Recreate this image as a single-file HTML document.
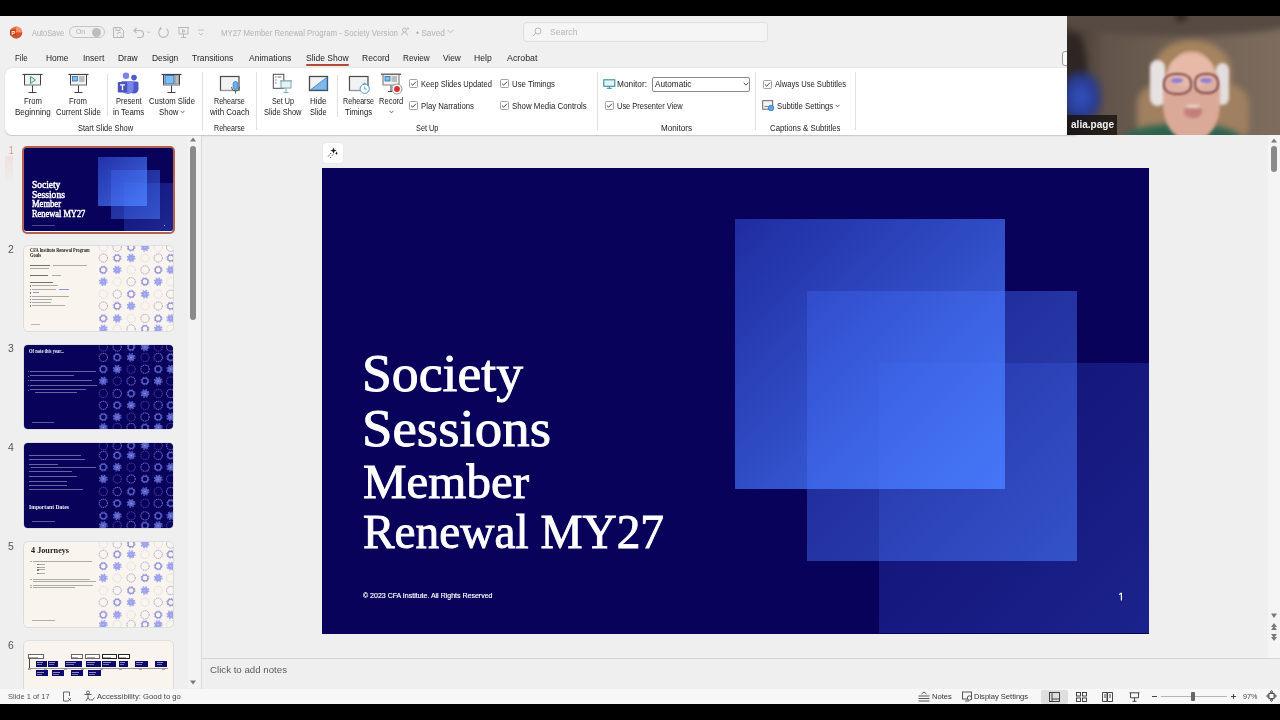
<!DOCTYPE html>
<html><head><meta charset="utf-8">
<style>
*{margin:0;padding:0;box-sizing:border-box}
html,body{width:1280px;height:720px;overflow:hidden;background:#efefef}
body{position:relative;font-family:"Liberation Sans",sans-serif;color:#262626}
.a{position:absolute}
svg.a{overflow:visible}
.t{position:absolute;white-space:nowrap;line-height:1;transform-origin:0 0}
</style></head><body>
<div class="a" style="left:0px;top:16px;width:1280px;height:688px;background:#efefef"></div>
<div class="a" style="left:0px;top:16px;width:1280px;height:52px;background:#f0f0f0"></div>
<svg class="a" style="left:9px;top:26px" width="14" height="13" viewBox="0 0 14 13"><circle cx="7.2" cy="6.5" r="6" fill="#ed6c47"/><path d="M7.2 0.5 A6 6 0 0 1 13.2 6.5 L7.2 6.5Z" fill="#ff8f6b"/><path d="M1.2 6.5 A6 6 0 0 0 7.2 12.5 A6 6 0 0 0 13.2 6.5Z" fill="#d35230"/><rect x="1" y="3.5" width="6" height="6" rx="1" fill="#c43e1c"/><text x="2.4" y="8.6" font-size="5.5" font-family="Liberation Sans" font-weight="700" fill="#fff">P</text></svg>
<div class="t" style="left:32.00px;top:28.57px;font-size:8.3px;color:#b0b0b0;transform:scaleX(0.8891);">AutoSave</div>
<div class="a" style="left:69px;top:26px;width:36px;height:12px;border:1px solid #c4c4c4;border-radius:6px"></div>
<div class="t" style="left:76.00px;top:28.23px;font-size:8px;color:#b0b0b0;transform:scaleX(0.8433);">On</div>
<div class="a" style="left:92px;top:28px;width:9px;height:9px;border-radius:50%;background:#bdbdbd"></div>
<svg class="a" style="left:112px;top:26px" width="13" height="13" viewBox="0 0 13 13" fill="none" stroke="#b8b8b8" stroke-width="1"><path d="M1.5 1.5h7l3 3v7h-10z"/><path d="M4 1.5v3h4v-3"/><path d="M5 8.5a2.5 2.5 0 0 1 4.5-1M9.5 9.5a2.5 2.5 0 0 1-4.5 1"/></svg>
<svg class="a" style="left:132px;top:26px" width="22" height="13" viewBox="0 0 22 13" fill="none" stroke="#b8b8b8" stroke-width="1.1"><path d="M2 4.5h6a3.5 3.5 0 0 1 0 7H5"/><path d="M4.5 2L2 4.5 4.5 7"/><path d="M15 5.5l1.5 1.5 1.5-1.5" stroke-width="0.9"/></svg>
<svg class="a" style="left:157px;top:26px" width="13" height="13" viewBox="0 0 13 13" fill="none" stroke="#b8b8b8" stroke-width="1.1"><path d="M9.5 2.8A4.8 4.8 0 1 1 4 2.5"/><path d="M3 1l1 1.6-1.7 0.9"/></svg>
<svg class="a" style="left:177px;top:26px" width="13" height="13" viewBox="0 0 13 13" fill="none" stroke="#b8b8b8" stroke-width="1"><path d="M1 1.5h11M2 1.5v6.5h9v-6.5M6.5 8v3.5M4 11.5h5"/><path d="M5.5 3.5l2.5 1.5-2.5 1.5z"/></svg>
<svg class="a" style="left:197px;top:28px" width="8" height="8" viewBox="0 0 8 8" fill="none" stroke="#bbb" stroke-width="0.9"><path d="M1 2h6M2 5l2 2 2-2"/></svg>
<div class="t" style="left:221.00px;top:28.77px;font-size:8.3px;color:#b2b2b2;transform:scaleX(0.9427);">MY27 Member Renewal Program - Society Version</div>
<svg class="a" style="left:401px;top:27px" width="9" height="9" viewBox="0 0 9 9" fill="none" stroke="#b5b5b5" stroke-width="0.9"><circle cx="3.5" cy="3" r="2"/><path d="M0.5 8.5a3 3 0 0 1 6 0M6 1.5l2 0M7 .5v2"/></svg>
<div class="t" style="left:416.00px;top:28.77px;font-size:8.3px;color:#b2b2b2;transform:scaleX(1.0088);">• Saved</div>
<svg class="a" style="left:447px;top:29px" width="7" height="5" viewBox="0 0 7 5" fill="none" stroke="#b5b5b5" stroke-width="0.9"><path d="M0.5 0.8l3 3 3-3"/></svg>
<div class="a" style="left:523px;top:22px;width:245px;height:20px;background:#f5f5f5;border:1px solid #dedede;border-radius:4px"></div>
<svg class="a" style="left:532px;top:27px" width="10" height="10" viewBox="0 0 10 10" fill="none" stroke="#b8b8b8" stroke-width="1"><circle cx="6" cy="4" r="3"/><path d="M4 6l-3 3"/></svg>
<div class="t" style="left:550.00px;top:27.97px;font-size:8.3px;color:#b5b5b5;transform:scaleX(1.0457);">Search</div>
<div class="t" style="left:14.60px;top:53.98px;font-size:9px;color:#1e1e1e;transform:scaleX(0.8688);">File</div>
<div class="t" style="left:45.60px;top:53.98px;font-size:9px;color:#1e1e1e;transform:scaleX(0.9372);">Home</div>
<div class="t" style="left:82.50px;top:53.98px;font-size:9px;color:#1e1e1e;transform:scaleX(0.9463);">Insert</div>
<div class="t" style="left:118.20px;top:53.98px;font-size:9px;color:#1e1e1e;transform:scaleX(0.9380);">Draw</div>
<div class="t" style="left:151.60px;top:53.98px;font-size:9px;color:#1e1e1e;transform:scaleX(0.9387);">Design</div>
<div class="t" style="left:192.30px;top:53.98px;font-size:9px;color:#1e1e1e;transform:scaleX(0.9454);">Transitions</div>
<div class="t" style="left:248.60px;top:53.98px;font-size:9px;color:#1e1e1e;transform:scaleX(0.9478);">Animations</div>
<div class="t" style="left:306.30px;top:53.98px;font-size:9px;color:#1e1e1e;transform:scaleX(0.9483);">Slide Show</div>
<div class="t" style="left:362.30px;top:53.98px;font-size:9px;color:#1e1e1e;transform:scaleX(0.9478);">Record</div>
<div class="t" style="left:403.30px;top:53.98px;font-size:9px;color:#1e1e1e;transform:scaleX(0.9048);">Review</div>
<div class="t" style="left:443.20px;top:53.98px;font-size:9px;color:#1e1e1e;transform:scaleX(0.9201);">View</div>
<div class="t" style="left:474.20px;top:53.98px;font-size:9px;color:#1e1e1e;transform:scaleX(0.9562);">Help</div>
<div class="t" style="left:506.50px;top:53.98px;font-size:9px;color:#1e1e1e;transform:scaleX(0.9801);">Acrobat</div>
<div class="a" style="left:306px;top:64.3px;width:43px;height:1.7px;background:#b04a36;border-radius:1px"></div>
<div class="a" style="left:1062px;top:51px;width:9px;height:15px;border:1px solid #9a9a9a;border-radius:3px;background:#fafafa"></div>
<div class="a" style="left:5px;top:68px;width:1075px;height:67px;background:#fff;border-radius:7px;box-shadow:0 0.5px 1.5px rgba(0,0,0,.18)"></div>
<svg class="a" style="left:21px;top:73px;" width="23" height="21" viewBox="0 0 23 21"><path d="M1.5 1.5h20" stroke="#424242" stroke-width="1.2"/><rect x="3.5" y="1.5" width="16" height="10.5" fill="#f3f3f3" stroke="#424242" stroke-width="1"/><path d="M3.5 12h16" stroke="#c8c8c8" stroke-width="1"/><path d="M9.5 3.5l5 3.5-5 3.5z" fill="#d6efd9" stroke="#4e9a64" stroke-width="1"/><path d="M11.5 12.5v7M7.5 19.5h8" stroke="#424242" stroke-width="1"/></svg>
<div class="t" style="left:23.80px;top:96.62px;font-size:8.6px;color:#1c1c1c;transform:scaleX(0.8971);">From</div>
<div class="t" style="left:14.60px;top:108.32px;font-size:8.6px;color:#1c1c1c;transform:scaleX(0.9358);">Beginning</div>
<svg class="a" style="left:67px;top:73px;" width="23" height="21" viewBox="0 0 23 21"><path d="M1.5 1.5h20" stroke="#424242" stroke-width="1.2"/><rect x="3.5" y="1.5" width="16" height="10.5" fill="#f3f3f3" stroke="#424242" stroke-width="1"/><path d="M3.5 12h16" stroke="#c8c8c8" stroke-width="1"/><rect x="5.5" y="3.5" width="5" height="4.5" fill="#7fbdf0" stroke="#2a6fb5" stroke-width="0.8"/><path d="M12 4h5.5M12 6h5.5M12 8h5.5" stroke="#6a6a6a" stroke-width="0.8"/><path d="M11.5 12.5v7M7.5 19.5h8" stroke="#424242" stroke-width="1"/></svg>
<div class="t" style="left:69.00px;top:96.62px;font-size:8.6px;color:#1c1c1c;transform:scaleX(0.8971);">From</div>
<div class="t" style="left:55.90px;top:108.32px;font-size:8.6px;color:#1c1c1c;transform:scaleX(0.8926);">Current Slide</div>
<div class="a" style="left:107px;top:74px;width:1px;height:42px;background:#e1e1e1"></div>
<svg class="a" style="left:117px;top:72px;" width="22" height="22" viewBox="0 0 22 22"><circle cx="9" cy="3.8" r="3.2" fill="#7b83eb"/><circle cx="17" cy="5.6" r="2.8" fill="#5059c9"/><path d="M13.5 9.5h6.5a1.5 1.5 0 0 1 1.5 1.5v6a4.5 4.5 0 0 1-4.5 4.5h-1a3 3 0 0 1-2.5-1.5z" fill="#5059c9"/><path d="M4.5 9h10.5a1.5 1.5 0 0 1 1.5 1.5v6.5a5 5 0 0 1-5 5h-1a6 6 0 0 1-6-6z" fill="#7b83eb"/><rect x="0.8" y="10" width="9.5" height="10.5" rx="1.2" fill="#4b53bc"/><path d="M3 12.8h5M5.5 12.8v5.5" stroke="#fff" stroke-width="1.3"/></svg>
<div class="t" style="left:115.65px;top:96.62px;font-size:8.6px;color:#1c1c1c;transform:scaleX(0.8671);">Present</div>
<div class="t" style="left:112.60px;top:108.32px;font-size:8.6px;color:#1c1c1c;transform:scaleX(0.9107);">in Teams</div>
<svg class="a" style="left:160px;top:73px;" width="23" height="21" viewBox="0 0 23 21"><path d="M1.5 1.5h20" stroke="#424242" stroke-width="1.2"/><rect x="3.5" y="1.5" width="16" height="10.5" fill="#e8e8e8" stroke="#424242" stroke-width="1"/><rect x="5" y="2.5" width="9" height="8.5" fill="#7fbdf0" stroke="#2a6fb5" stroke-width="0.9"/><rect x="15" y="2.5" width="3.5" height="8.5" fill="#bdbdbd" stroke="#7a7a7a" stroke-width="0.6"/><path d="M3.5 12h16" stroke="#c8c8c8" stroke-width="1"/><path d="M11.5 12.5v7M7.5 19.5h8" stroke="#424242" stroke-width="1"/></svg>
<div class="t" style="left:149.10px;top:96.62px;font-size:8.6px;color:#1c1c1c;transform:scaleX(0.8994);">Custom Slide</div>
<div class="t" style="left:158.90px;top:108.32px;font-size:8.6px;color:#1c1c1c;transform:scaleX(0.9064);">Show</div>
<svg class="a" style="left:180px;top:110px" width="5" height="4" viewBox="0 0 5 4" fill="none" stroke="#444" stroke-width="0.8"><path d="M0.5 0.8l2 2 2-2"/></svg>
<div class="t" style="left:77.80px;top:124.32px;font-size:8.6px;color:#1c1c1c;transform:scaleX(0.8682);">Start Slide Show</div>
<div class="a" style="left:202px;top:72px;width:1px;height:58px;background:#e1e1e1"></div>
<svg class="a" style="left:219px;top:75px;" width="22" height="19" viewBox="0 0 22 19"><rect x="1.5" y="1.5" width="18.5" height="14" fill="#f2f2f2" stroke="#4a4a4a" stroke-width="1.2"/><path d="M1.5 15.5h18.5" stroke="#9a9a9a"/><path d="M12.5 12a4 4 0 0 0 8 0" fill="none" stroke="#4a4a4a" stroke-width="0.9"/><rect x="14.2" y="6.5" width="4.6" height="8" rx="2.3" fill="#6fb1ee" stroke="#2f7bc4" stroke-width="0.8"/><path d="M16.5 16v2.5" stroke="#4a4a4a" stroke-width="0.9"/></svg>
<div class="t" style="left:214.40px;top:96.62px;font-size:8.6px;color:#1c1c1c;transform:scaleX(0.8259);">Rehearse</div>
<div class="t" style="left:209.70px;top:108.32px;font-size:8.6px;color:#1c1c1c;transform:scaleX(0.9261);">with Coach</div>
<div class="t" style="left:214.40px;top:124.32px;font-size:8.6px;color:#1c1c1c;transform:scaleX(0.8259);">Rehearse</div>
<div class="a" style="left:256px;top:72px;width:1px;height:58px;background:#e1e1e1"></div>
<svg class="a" style="left:272px;top:73px;" width="21" height="21" viewBox="0 0 21 21"><rect x="1.3" y="1.3" width="10.5" height="14" fill="#fff" stroke="#4a4a4a" stroke-width="1"/><path d="M3 4h1.5M5.5 4h4M3 7h1.5M3 10h1.5" stroke="#6a6a6a" stroke-width="0.9"/><path d="M8 8h12" stroke="#7aa9b0" stroke-width="1.1"/><rect x="9" y="8" width="10" height="7" fill="#e6f2f4" stroke="#7aa9b0" stroke-width="1"/><path d="M14 15v4.5M11.5 19.5h5" stroke="#7aa9b0" stroke-width="1"/></svg>
<div class="t" style="left:271.75px;top:96.62px;font-size:8.6px;color:#1c1c1c;transform:scaleX(0.8406);">Set Up</div>
<div class="t" style="left:263.65px;top:108.32px;font-size:8.6px;color:#1c1c1c;transform:scaleX(0.8715);">Slide Show</div>
<svg class="a" style="left:308px;top:75px;" width="21" height="17" viewBox="0 0 21 17"><rect x="1.5" y="1.5" width="18" height="14" fill="#f2f2f2" stroke="#4a4a4a" stroke-width="1.3"/><path d="M2.5 14.8L19 2.2v12.6z" fill="#7fb8ec" stroke="#3b7fc0" stroke-width="0.8"/></svg>
<div class="t" style="left:310.20px;top:96.62px;font-size:8.6px;color:#1c1c1c;transform:scaleX(0.9385);">Hide</div>
<div class="t" style="left:310.20px;top:108.32px;font-size:8.6px;color:#1c1c1c;transform:scaleX(0.8680);">Slide</div>
<div class="a" style="left:337px;top:75px;width:1px;height:42px;background:#e1e1e1"></div>
<svg class="a" style="left:348px;top:75px;" width="23" height="20" viewBox="0 0 23 20"><rect x="1.5" y="1.5" width="18.5" height="14" fill="#f2f2f2" stroke="#4a4a4a" stroke-width="1.2"/><path d="M1.5 15.5h18.5" stroke="#9a9a9a"/><circle cx="16.7" cy="13.8" r="4.6" fill="#fff" stroke="#4a9ad6" stroke-width="1"/><path d="M16.7 11.5v2.5h2" fill="none" stroke="#4a9ad6" stroke-width="0.9"/><path d="M15.5 8.3h2.4" stroke="#4a9ad6" stroke-width="1"/></svg>
<div class="t" style="left:342.75px;top:96.62px;font-size:8.6px;color:#1c1c1c;transform:scaleX(0.8340);">Rehearse</div>
<div class="t" style="left:345.15px;top:108.32px;font-size:8.6px;color:#1c1c1c;transform:scaleX(0.9165);">Timings</div>
<svg class="a" style="left:380px;top:73px;" width="23" height="22" viewBox="0 0 23 22"><path d="M1 1.2h20" stroke="#424242" stroke-width="1.2"/><rect x="3" y="1.5" width="16" height="10.5" fill="#f3f3f3" stroke="#6a6a6a" stroke-width="1"/><path d="M3 12h16" stroke="#c8c8c8" stroke-width="1"/><rect x="5" y="3.5" width="5" height="4.5" fill="#7fbdf0" stroke="#2a6fb5" stroke-width="0.8"/><path d="M11.5 4h5.5M11.5 6h5.5M11.5 8h5.5" stroke="#6a6a6a" stroke-width="0.8"/><path d="M11 12.5v6M8 18.5h4" stroke="#424242" stroke-width="1"/><circle cx="17" cy="16" r="5" fill="#fff" stroke="#8a8a8a" stroke-width="0.9"/><circle cx="17" cy="16" r="2.9" fill="#d92c2c"/></svg>
<div class="t" style="left:378.85px;top:96.92px;font-size:8.6px;color:#1c1c1c;transform:scaleX(0.8765);">Record</div>
<svg class="a" style="left:389px;top:110px" width="5" height="4" viewBox="0 0 5 4" fill="none" stroke="#444" stroke-width="0.8"><path d="M0.5 0.8l2 2 2-2"/></svg>
<svg class="a" style="left:408.5px;top:79.3px" width="9" height="9" viewBox="0 0 9 9"><rect x="0.5" y="0.5" width="8" height="8" rx="1" fill="#fff" stroke="#8c8c8c" stroke-width="0.8"/><path d="M2 4.6l1.7 1.6 3.3-3.5" fill="none" stroke="#333" stroke-width="0.9"/></svg>
<div class="t" style="left:420.80px;top:79.92px;font-size:8.6px;color:#1c1c1c;transform:scaleX(0.8774);">Keep Slides Updated</div>
<svg class="a" style="left:408.5px;top:100.9px" width="9" height="9" viewBox="0 0 9 9"><rect x="0.5" y="0.5" width="8" height="8" rx="1" fill="#fff" stroke="#8c8c8c" stroke-width="0.8"/><path d="M2 4.6l1.7 1.6 3.3-3.5" fill="none" stroke="#333" stroke-width="0.9"/></svg>
<div class="t" style="left:420.80px;top:101.52px;font-size:8.6px;color:#1c1c1c;transform:scaleX(0.9015);">Play Narrations</div>
<svg class="a" style="left:499.6px;top:79.3px" width="9" height="9" viewBox="0 0 9 9"><rect x="0.5" y="0.5" width="8" height="8" rx="1" fill="#fff" stroke="#8c8c8c" stroke-width="0.8"/><path d="M2 4.6l1.7 1.6 3.3-3.5" fill="none" stroke="#333" stroke-width="0.9"/></svg>
<div class="t" style="left:512.20px;top:79.92px;font-size:8.6px;color:#1c1c1c;transform:scaleX(0.9088);">Use Timings</div>
<svg class="a" style="left:499.6px;top:100.9px" width="9" height="9" viewBox="0 0 9 9"><rect x="0.5" y="0.5" width="8" height="8" rx="1" fill="#fff" stroke="#8c8c8c" stroke-width="0.8"/><path d="M2 4.6l1.7 1.6 3.3-3.5" fill="none" stroke="#333" stroke-width="0.9"/></svg>
<div class="t" style="left:512.20px;top:101.52px;font-size:8.6px;color:#1c1c1c;transform:scaleX(0.9151);">Show Media Controls</div>
<div class="t" style="left:415.60px;top:124.32px;font-size:8.6px;color:#1c1c1c;transform:scaleX(0.8520);">Set Up</div>
<div class="a" style="left:597px;top:72px;width:1px;height:58px;background:#e1e1e1"></div>
<svg class="a" style="left:603px;top:79px;" width="13" height="10" viewBox="0 0 13 10"><rect x="0.8" y="0.8" width="11" height="6.5" fill="#e3f3f5" stroke="#2f8f9d" stroke-width="1.1"/><path d="M6.3 7.5v2M3.8 9.3h5" stroke="#2f8f9d" stroke-width="1"/></svg>
<div class="t" style="left:617.30px;top:79.92px;font-size:8.6px;color:#1c1c1c;transform:scaleX(0.9657);">Monitor:</div>
<div class="a" style="left:651.5px;top:76.5px;width:98.5px;height:15.5px;border:1px solid #8a8a8a;border-radius:2px;background:#fff"></div>
<div class="t" style="left:654.50px;top:80.12px;font-size:8.6px;color:#1c1c1c;transform:scaleX(0.9545);">Automatic</div>
<svg class="a" style="left:742.5px;top:82px" width="6" height="4" viewBox="0 0 6 4" fill="none" stroke="#333" stroke-width="0.9"><path d="M0.7 0.8l2.3 2.3 2.3-2.3"/></svg>
<svg class="a" style="left:604.5px;top:101.2px" width="9" height="9" viewBox="0 0 9 9"><rect x="0.5" y="0.5" width="8" height="8" rx="1" fill="#fff" stroke="#8c8c8c" stroke-width="0.8"/><path d="M2 4.6l1.7 1.6 3.3-3.5" fill="none" stroke="#333" stroke-width="0.9"/></svg>
<div class="t" style="left:616.70px;top:101.52px;font-size:8.6px;color:#1c1c1c;transform:scaleX(0.8676);">Use Presenter View</div>
<div class="t" style="left:660.70px;top:124.32px;font-size:8.6px;color:#1c1c1c;transform:scaleX(0.9400);">Monitors</div>
<div class="a" style="left:755px;top:72px;width:1px;height:58px;background:#e1e1e1"></div>
<svg class="a" style="left:762.8px;top:79.5px" width="9" height="9" viewBox="0 0 9 9"><rect x="0.5" y="0.5" width="8" height="8" rx="1" fill="#fff" stroke="#8c8c8c" stroke-width="0.8"/><path d="M2 4.6l1.7 1.6 3.3-3.5" fill="none" stroke="#333" stroke-width="0.9"/></svg>
<div class="t" style="left:774.90px;top:79.92px;font-size:8.6px;color:#1c1c1c;transform:scaleX(0.8854);">Always Use Subtitles</div>
<svg class="a" style="left:762px;top:100px;" width="13" height="11" viewBox="0 0 13 11"><rect x="0.7" y="0.7" width="10" height="8.5" fill="#f2f2f2" stroke="#555" stroke-width="0.9"/><path d="M2.5 6.5h4" stroke="#666" stroke-width="0.8"/><circle cx="9" cy="8" r="2.8" fill="#5aa6e8" stroke="#2a6fb5" stroke-width="0.7"/></svg>
<div class="t" style="left:776.60px;top:101.52px;font-size:8.6px;color:#1c1c1c;transform:scaleX(0.9043);">Subtitle Settings</div>
<svg class="a" style="left:835px;top:104px" width="5" height="4" viewBox="0 0 5 4" fill="none" stroke="#444" stroke-width="0.8"><path d="M0.5 0.8l2 2 2-2"/></svg>
<div class="t" style="left:770.00px;top:124.32px;font-size:8.6px;color:#1c1c1c;transform:scaleX(0.9103);">Captions &amp; Subtitles</div>
<div class="a" style="left:855px;top:72px;width:1px;height:58px;background:#e1e1e1"></div>
<div class="a" style="left:0px;top:136px;width:201px;height:553px;background:#efefef"></div>
<div class="a" style="left:188px;top:136px;width:13px;height:552px;background:#f3f3f3"></div>
<svg class="a" style="left:189px;top:136px" width="8" height="7" viewBox="0 0 8 7"><path d="M4 1.5L7 5.5H1z" fill="#7a7a7a"/></svg>
<div class="a" style="left:190px;top:146px;width:6px;height:174px;background:#8a8a8a;border-radius:3px"></div>
<svg class="a" style="left:189px;top:679px" width="8" height="7" viewBox="0 0 8 7"><path d="M4 5.5L7 1.5H1z" fill="#7a7a7a"/></svg>
<div class="a" style="left:201px;top:136px;width:1px;height:553px;background:#d9d9d9"></div>
<div class="t" style="left:8.50px;top:146.03px;font-size:10px;color:#d88e84;transform:scaleX(0.8091);">1</div>
<div class="a" style="left:5px;top:156px;width:8px;height:32px;background:linear-gradient(rgba(240,200,195,.35),rgba(240,200,195,0))"></div>
<div class="t" style="left:7.60px;top:244.11px;font-size:10.5px;color:#555555;transform:scaleX(0.9932);">2</div>
<div class="t" style="left:7.60px;top:343.11px;font-size:10.5px;color:#555555;transform:scaleX(0.9932);">3</div>
<div class="t" style="left:7.60px;top:441.61px;font-size:10.5px;color:#555555;transform:scaleX(0.9932);">4</div>
<div class="t" style="left:7.60px;top:540.61px;font-size:10.5px;color:#555555;transform:scaleX(0.9932);">5</div>
<div class="t" style="left:7.60px;top:639.61px;font-size:10.5px;color:#555555;transform:scaleX(0.9932);">6</div>
<div class="a" style="left:22px;top:145.5px;width:153px;height:88.5px;border:2px solid #b4604e;border-radius:5px;background:#fff"></div>
<div class="a" style="left:24px;top:148px;width:149px;height:83px;overflow:hidden;border-radius:2px"><div class="a" style="left:0;top:0;width:149px;height:83px;background:#08025a"></div><div class="a" style="left:100px;top:35px;width:49px;height:49px;background:linear-gradient(135deg,rgba(60,90,245,.20),rgba(70,110,255,.34))"></div><div class="a" style="left:87px;top:22px;width:49px;height:49px;background:linear-gradient(135deg,rgba(65,100,255,.32),rgba(75,125,255,.55))"></div><div class="a" style="left:74px;top:9px;width:49px;height:49px;background:linear-gradient(135deg,rgba(65,100,255,.48),rgba(75,130,255,.80))"></div><div class="a" style="left:7.7px;top:76.8px;width:23px;height:1px;background:rgba(255,255,255,.28)"></div><div class="a" style="left:140px;top:76.5px;width:1px;height:1px;background:rgba(255,255,255,.6)"></div></div>
<div class="t" style="left:31.90px;top:179.86px;font-size:9.6px;color:#ffffff;font-family:'Liberation Serif',serif;transform:scaleX(0.9828);-webkit-text-stroke:0.45px #fff;">Society</div>
<div class="t" style="left:31.90px;top:189.86px;font-size:9.6px;color:#ffffff;font-family:'Liberation Serif',serif;transform:scaleX(0.9947);-webkit-text-stroke:0.45px #fff;">Sessions</div>
<div class="t" style="left:31.90px;top:199.46px;font-size:9.6px;color:#ffffff;font-family:'Liberation Serif',serif;transform:scaleX(0.8917);-webkit-text-stroke:0.45px #fff;">Member</div>
<div class="t" style="left:31.90px;top:208.66px;font-size:9.6px;color:#ffffff;font-family:'Liberation Serif',serif;transform:scaleX(0.8730);-webkit-text-stroke:0.45px #fff;">Renewal MY27</div>
<div class="a" style="left:24px;top:246px;width:149px;height:85px;background:#f9f5ee;border-radius:4px;overflow:hidden;box-shadow:0 0 0 0.6px #cfcfcf"><svg class="a" style="left:0;top:0;filter:blur(0.35px)" width="149" height="85"><g opacity="1.0"><circle cx="79.30" cy="1.30" r="4.14" fill="none" stroke="#d8d3e2" stroke-width="0.9" stroke-dasharray="1.21 0.65"/><circle cx="93.20" cy="1.30" r="4.14" fill="none" stroke="#9a92bc" stroke-width="0.9" stroke-dasharray="1.21 0.65"/><circle cx="107.10" cy="1.30" r="2.97" fill="none" stroke="#9696da" stroke-width="1.25"/><circle cx="107.10" cy="1.30" r="3.87" fill="none" stroke="#9696da" stroke-width="1.0" stroke-dasharray="1.67 1.37"/><circle cx="121.00" cy="1.30" r="3.24" fill="#9ca2ee"/><circle cx="121.00" cy="1.30" r="3.87" fill="none" stroke="#9ca2ee" stroke-width="1.1" stroke-dasharray="1.67 1.37"/><circle cx="121.00" cy="1.30" r="0.6" fill="rgba(255,255,255,.5)"/><circle cx="134.20" cy="1.30" r="4.14" fill="none" stroke="#d8d3e2" stroke-width="0.9" stroke-dasharray="1.21 0.65"/><circle cx="146.70" cy="1.30" r="4.14" fill="none" stroke="#9a92bc" stroke-width="0.9" stroke-dasharray="1.21 0.65"/><circle cx="79.30" cy="12.00" r="4.14" fill="none" stroke="#9a92bc" stroke-width="0.9" stroke-dasharray="1.21 0.65"/><circle cx="93.20" cy="12.00" r="2.97" fill="none" stroke="#9696da" stroke-width="1.25"/><circle cx="93.20" cy="12.00" r="3.87" fill="none" stroke="#9696da" stroke-width="1.0" stroke-dasharray="1.67 1.37"/><circle cx="107.10" cy="12.00" r="3.24" fill="#9ca2ee"/><circle cx="107.10" cy="12.00" r="3.87" fill="none" stroke="#9ca2ee" stroke-width="1.1" stroke-dasharray="1.67 1.37"/><circle cx="107.10" cy="12.00" r="0.6" fill="rgba(255,255,255,.5)"/><circle cx="121.00" cy="12.00" r="4.14" fill="none" stroke="#d8d3e2" stroke-width="0.9" stroke-dasharray="1.21 0.65"/><circle cx="134.20" cy="12.00" r="4.14" fill="none" stroke="#9a92bc" stroke-width="0.9" stroke-dasharray="1.21 0.65"/><circle cx="146.70" cy="12.00" r="2.97" fill="none" stroke="#9696da" stroke-width="1.25"/><circle cx="146.70" cy="12.00" r="3.87" fill="none" stroke="#9696da" stroke-width="1.0" stroke-dasharray="1.67 1.37"/><circle cx="79.30" cy="23.90" r="2.97" fill="none" stroke="#9696da" stroke-width="1.25"/><circle cx="79.30" cy="23.90" r="3.87" fill="none" stroke="#9696da" stroke-width="1.0" stroke-dasharray="1.67 1.37"/><circle cx="93.20" cy="23.90" r="3.24" fill="#9ca2ee"/><circle cx="93.20" cy="23.90" r="3.87" fill="none" stroke="#9ca2ee" stroke-width="1.1" stroke-dasharray="1.67 1.37"/><circle cx="93.20" cy="23.90" r="0.6" fill="rgba(255,255,255,.5)"/><circle cx="107.10" cy="23.90" r="4.14" fill="none" stroke="#d8d3e2" stroke-width="0.9" stroke-dasharray="1.21 0.65"/><circle cx="121.00" cy="23.90" r="4.14" fill="none" stroke="#9a92bc" stroke-width="0.9" stroke-dasharray="1.21 0.65"/><circle cx="134.20" cy="23.90" r="2.97" fill="none" stroke="#9696da" stroke-width="1.25"/><circle cx="134.20" cy="23.90" r="3.87" fill="none" stroke="#9696da" stroke-width="1.0" stroke-dasharray="1.67 1.37"/><circle cx="146.70" cy="23.90" r="3.24" fill="#9ca2ee"/><circle cx="146.70" cy="23.90" r="3.87" fill="none" stroke="#9ca2ee" stroke-width="1.1" stroke-dasharray="1.67 1.37"/><circle cx="146.70" cy="23.90" r="0.6" fill="rgba(255,255,255,.5)"/><circle cx="79.30" cy="35.70" r="3.24" fill="#9ca2ee"/><circle cx="79.30" cy="35.70" r="3.87" fill="none" stroke="#9ca2ee" stroke-width="1.1" stroke-dasharray="1.67 1.37"/><circle cx="79.30" cy="35.70" r="0.6" fill="rgba(255,255,255,.5)"/><circle cx="93.20" cy="35.70" r="4.14" fill="none" stroke="#d8d3e2" stroke-width="0.9" stroke-dasharray="1.21 0.65"/><circle cx="107.10" cy="35.70" r="4.14" fill="none" stroke="#9a92bc" stroke-width="0.9" stroke-dasharray="1.21 0.65"/><circle cx="121.00" cy="35.70" r="2.97" fill="none" stroke="#9696da" stroke-width="1.25"/><circle cx="121.00" cy="35.70" r="3.87" fill="none" stroke="#9696da" stroke-width="1.0" stroke-dasharray="1.67 1.37"/><circle cx="134.20" cy="35.70" r="3.24" fill="#9ca2ee"/><circle cx="134.20" cy="35.70" r="3.87" fill="none" stroke="#9ca2ee" stroke-width="1.1" stroke-dasharray="1.67 1.37"/><circle cx="134.20" cy="35.70" r="0.6" fill="rgba(255,255,255,.5)"/><circle cx="146.70" cy="35.70" r="4.14" fill="none" stroke="#d8d3e2" stroke-width="0.9" stroke-dasharray="1.21 0.65"/><circle cx="79.30" cy="48.20" r="4.14" fill="none" stroke="#d8d3e2" stroke-width="0.9" stroke-dasharray="1.21 0.65"/><circle cx="93.20" cy="48.20" r="4.14" fill="none" stroke="#9a92bc" stroke-width="0.9" stroke-dasharray="1.21 0.65"/><circle cx="107.10" cy="48.20" r="2.97" fill="none" stroke="#9696da" stroke-width="1.25"/><circle cx="107.10" cy="48.20" r="3.87" fill="none" stroke="#9696da" stroke-width="1.0" stroke-dasharray="1.67 1.37"/><circle cx="121.00" cy="48.20" r="3.24" fill="#9ca2ee"/><circle cx="121.00" cy="48.20" r="3.87" fill="none" stroke="#9ca2ee" stroke-width="1.1" stroke-dasharray="1.67 1.37"/><circle cx="121.00" cy="48.20" r="0.6" fill="rgba(255,255,255,.5)"/><circle cx="134.20" cy="48.20" r="4.14" fill="none" stroke="#d8d3e2" stroke-width="0.9" stroke-dasharray="1.21 0.65"/><circle cx="146.70" cy="48.20" r="4.14" fill="none" stroke="#9a92bc" stroke-width="0.9" stroke-dasharray="1.21 0.65"/><circle cx="79.30" cy="60.00" r="4.14" fill="none" stroke="#9a92bc" stroke-width="0.9" stroke-dasharray="1.21 0.65"/><circle cx="93.20" cy="60.00" r="2.97" fill="none" stroke="#9696da" stroke-width="1.25"/><circle cx="93.20" cy="60.00" r="3.87" fill="none" stroke="#9696da" stroke-width="1.0" stroke-dasharray="1.67 1.37"/><circle cx="107.10" cy="60.00" r="3.24" fill="#9ca2ee"/><circle cx="107.10" cy="60.00" r="3.87" fill="none" stroke="#9ca2ee" stroke-width="1.1" stroke-dasharray="1.67 1.37"/><circle cx="107.10" cy="60.00" r="0.6" fill="rgba(255,255,255,.5)"/><circle cx="121.00" cy="60.00" r="4.14" fill="none" stroke="#d8d3e2" stroke-width="0.9" stroke-dasharray="1.21 0.65"/><circle cx="134.20" cy="60.00" r="4.14" fill="none" stroke="#9a92bc" stroke-width="0.9" stroke-dasharray="1.21 0.65"/><circle cx="146.70" cy="60.00" r="2.97" fill="none" stroke="#9696da" stroke-width="1.25"/><circle cx="146.70" cy="60.00" r="3.87" fill="none" stroke="#9696da" stroke-width="1.0" stroke-dasharray="1.67 1.37"/><circle cx="79.30" cy="72.50" r="2.97" fill="none" stroke="#9696da" stroke-width="1.25"/><circle cx="79.30" cy="72.50" r="3.87" fill="none" stroke="#9696da" stroke-width="1.0" stroke-dasharray="1.67 1.37"/><circle cx="93.20" cy="72.50" r="3.24" fill="#9ca2ee"/><circle cx="93.20" cy="72.50" r="3.87" fill="none" stroke="#9ca2ee" stroke-width="1.1" stroke-dasharray="1.67 1.37"/><circle cx="93.20" cy="72.50" r="0.6" fill="rgba(255,255,255,.5)"/><circle cx="107.10" cy="72.50" r="4.14" fill="none" stroke="#d8d3e2" stroke-width="0.9" stroke-dasharray="1.21 0.65"/><circle cx="121.00" cy="72.50" r="4.14" fill="none" stroke="#9a92bc" stroke-width="0.9" stroke-dasharray="1.21 0.65"/><circle cx="134.20" cy="72.50" r="2.97" fill="none" stroke="#9696da" stroke-width="1.25"/><circle cx="134.20" cy="72.50" r="3.87" fill="none" stroke="#9696da" stroke-width="1.0" stroke-dasharray="1.67 1.37"/><circle cx="146.70" cy="72.50" r="3.24" fill="#9ca2ee"/><circle cx="146.70" cy="72.50" r="3.87" fill="none" stroke="#9ca2ee" stroke-width="1.1" stroke-dasharray="1.67 1.37"/><circle cx="146.70" cy="72.50" r="0.6" fill="rgba(255,255,255,.5)"/><circle cx="79.30" cy="82.90" r="3.24" fill="#9ca2ee"/><circle cx="79.30" cy="82.90" r="3.87" fill="none" stroke="#9ca2ee" stroke-width="1.1" stroke-dasharray="1.67 1.37"/><circle cx="79.30" cy="82.90" r="0.6" fill="rgba(255,255,255,.5)"/><circle cx="93.20" cy="82.90" r="4.14" fill="none" stroke="#d8d3e2" stroke-width="0.9" stroke-dasharray="1.21 0.65"/><circle cx="107.10" cy="82.90" r="4.14" fill="none" stroke="#9a92bc" stroke-width="0.9" stroke-dasharray="1.21 0.65"/><circle cx="121.00" cy="82.90" r="2.97" fill="none" stroke="#9696da" stroke-width="1.25"/><circle cx="121.00" cy="82.90" r="3.87" fill="none" stroke="#9696da" stroke-width="1.0" stroke-dasharray="1.67 1.37"/><circle cx="134.20" cy="82.90" r="3.24" fill="#9ca2ee"/><circle cx="134.20" cy="82.90" r="3.87" fill="none" stroke="#9ca2ee" stroke-width="1.1" stroke-dasharray="1.67 1.37"/><circle cx="134.20" cy="82.90" r="0.6" fill="rgba(255,255,255,.5)"/><circle cx="146.70" cy="82.90" r="4.14" fill="none" stroke="#d8d3e2" stroke-width="0.9" stroke-dasharray="1.21 0.65"/></g></svg><div class="a" style="left:5.7px;top:19.2px;width:20px;height:1.1px;background:rgba(30,30,30,.62)"></div><div class="a" style="left:29px;top:19.2px;width:34px;height:1.0px;background:rgba(70,70,70,.42)"></div><div class="a" style="left:5.7px;top:22.3px;width:19px;height:1.0px;background:rgba(70,70,70,.42)"></div><div class="a" style="left:5.7px;top:28.5px;width:18.5px;height:1.1px;background:rgba(30,30,30,.62)"></div><div class="a" style="left:27.5px;top:28.5px;width:9.5px;height:1.0px;background:rgba(70,70,70,.42)"></div><div class="a" style="left:5.7px;top:35.9px;width:23px;height:1.1px;background:rgba(30,30,30,.62)"></div><div class="a" style="left:5.7px;top:39.3px;width:1.6px;height:1.5px;background:rgba(40,40,60,.6)"></div><div class="a" style="left:8px;top:39.3px;width:26px;height:1.0px;background:rgba(70,70,70,.42)"></div><div class="a" style="left:5.7px;top:42.8px;width:1.6px;height:1.5px;background:rgba(40,40,60,.6)"></div><div class="a" style="left:8px;top:42.8px;width:24px;height:1.0px;background:rgba(70,70,70,.42)"></div><div class="a" style="left:5.7px;top:46.0px;width:1.6px;height:1.5px;background:rgba(40,40,60,.6)"></div><div class="a" style="left:8px;top:46.0px;width:0px;height:1.0px;background:rgba(70,70,70,.42)"></div><div class="a" style="left:5.7px;top:49.5px;width:1.6px;height:1.5px;background:rgba(40,40,60,.6)"></div><div class="a" style="left:8px;top:49.5px;width:37px;height:1.0px;background:rgba(70,70,70,.42)"></div><div class="a" style="left:5.7px;top:52.5px;width:1.6px;height:1.5px;background:rgba(40,40,60,.6)"></div><div class="a" style="left:8px;top:52.5px;width:20px;height:1.0px;background:rgba(70,70,70,.42)"></div><div class="a" style="left:5.7px;top:55.699999999999996px;width:1.6px;height:1.5px;background:rgba(40,40,60,.6)"></div><div class="a" style="left:8px;top:55.699999999999996px;width:19px;height:1.0px;background:rgba(70,70,70,.42)"></div><div class="a" style="left:5.7px;top:59.199999999999996px;width:1.6px;height:1.5px;background:rgba(40,40,60,.6)"></div><div class="a" style="left:8px;top:59.199999999999996px;width:33px;height:1.0px;background:rgba(70,70,70,.42)"></div><div class="a" style="left:35px;top:42.8px;width:10px;height:1.0px;background:rgba(60,90,200,.6)"></div><div class="a" style="left:8.5px;top:46px;width:6px;height:1.0px;background:rgba(60,90,200,.55)"></div><div class="a" style="left:6.5px;top:77.8px;width:9px;height:0.8px;background:rgba(90,90,90,.4)"></div></div>
<div class="t" style="left:29.70px;top:248.48px;font-size:5.4px;color:#222;font-family:'Liberation Serif',serif;font-weight:700;transform:scaleX(0.8031);">CFA Institute Renewal Program</div>
<div class="t" style="left:29.70px;top:253.08px;font-size:5.4px;color:#222;font-family:'Liberation Serif',serif;font-weight:700;transform:scaleX(0.8332);">Goals</div>
<div class="a" style="left:24px;top:345px;width:149px;height:84px;background:#08025a;border-radius:4px;overflow:hidden;box-shadow:0 0 0 0.6px #cfcfcf"><svg class="a" style="left:0;top:0;filter:blur(0.35px)" width="149" height="84"><g opacity="1.0"><circle cx="79.30" cy="2.00" r="4.14" fill="none" stroke="#3e3ca4" stroke-width="1.05" stroke-dasharray="1.21 0.65"/><circle cx="93.20" cy="2.00" r="4.14" fill="none" stroke="#6a6ad0" stroke-width="1.05" stroke-dasharray="1.21 0.65"/><circle cx="107.10" cy="2.00" r="2.97" fill="none" stroke="#5860c8" stroke-width="1.25"/><circle cx="107.10" cy="2.00" r="3.87" fill="none" stroke="#5860c8" stroke-width="1.0" stroke-dasharray="1.67 1.37"/><circle cx="121.00" cy="2.00" r="3.24" fill="#5c64cc"/><circle cx="121.00" cy="2.00" r="3.87" fill="none" stroke="#5c64cc" stroke-width="1.1" stroke-dasharray="1.67 1.37"/><circle cx="121.00" cy="2.00" r="0.6" fill="rgba(255,255,255,.5)"/><circle cx="134.20" cy="2.00" r="4.14" fill="none" stroke="#3e3ca4" stroke-width="1.05" stroke-dasharray="1.21 0.65"/><circle cx="146.70" cy="2.00" r="4.14" fill="none" stroke="#6a6ad0" stroke-width="1.05" stroke-dasharray="1.21 0.65"/><circle cx="79.30" cy="12.40" r="4.14" fill="none" stroke="#6a6ad0" stroke-width="1.05" stroke-dasharray="1.21 0.65"/><circle cx="93.20" cy="12.40" r="2.97" fill="none" stroke="#5860c8" stroke-width="1.25"/><circle cx="93.20" cy="12.40" r="3.87" fill="none" stroke="#5860c8" stroke-width="1.0" stroke-dasharray="1.67 1.37"/><circle cx="107.10" cy="12.40" r="3.24" fill="#5c64cc"/><circle cx="107.10" cy="12.40" r="3.87" fill="none" stroke="#5c64cc" stroke-width="1.1" stroke-dasharray="1.67 1.37"/><circle cx="107.10" cy="12.40" r="0.6" fill="rgba(255,255,255,.5)"/><circle cx="121.00" cy="12.40" r="4.14" fill="none" stroke="#3e3ca4" stroke-width="1.05" stroke-dasharray="1.21 0.65"/><circle cx="134.20" cy="12.40" r="4.14" fill="none" stroke="#6a6ad0" stroke-width="1.05" stroke-dasharray="1.21 0.65"/><circle cx="146.70" cy="12.40" r="2.97" fill="none" stroke="#5860c8" stroke-width="1.25"/><circle cx="146.70" cy="12.40" r="3.87" fill="none" stroke="#5860c8" stroke-width="1.0" stroke-dasharray="1.67 1.37"/><circle cx="79.30" cy="24.20" r="2.97" fill="none" stroke="#5860c8" stroke-width="1.25"/><circle cx="79.30" cy="24.20" r="3.87" fill="none" stroke="#5860c8" stroke-width="1.0" stroke-dasharray="1.67 1.37"/><circle cx="93.20" cy="24.20" r="3.24" fill="#5c64cc"/><circle cx="93.20" cy="24.20" r="3.87" fill="none" stroke="#5c64cc" stroke-width="1.1" stroke-dasharray="1.67 1.37"/><circle cx="93.20" cy="24.20" r="0.6" fill="rgba(255,255,255,.5)"/><circle cx="107.10" cy="24.20" r="4.14" fill="none" stroke="#3e3ca4" stroke-width="1.05" stroke-dasharray="1.21 0.65"/><circle cx="121.00" cy="24.20" r="4.14" fill="none" stroke="#6a6ad0" stroke-width="1.05" stroke-dasharray="1.21 0.65"/><circle cx="134.20" cy="24.20" r="2.97" fill="none" stroke="#5860c8" stroke-width="1.25"/><circle cx="134.20" cy="24.20" r="3.87" fill="none" stroke="#5860c8" stroke-width="1.0" stroke-dasharray="1.67 1.37"/><circle cx="146.70" cy="24.20" r="3.24" fill="#5c64cc"/><circle cx="146.70" cy="24.20" r="3.87" fill="none" stroke="#5c64cc" stroke-width="1.1" stroke-dasharray="1.67 1.37"/><circle cx="146.70" cy="24.20" r="0.6" fill="rgba(255,255,255,.5)"/><circle cx="79.30" cy="36.00" r="3.24" fill="#5c64cc"/><circle cx="79.30" cy="36.00" r="3.87" fill="none" stroke="#5c64cc" stroke-width="1.1" stroke-dasharray="1.67 1.37"/><circle cx="79.30" cy="36.00" r="0.6" fill="rgba(255,255,255,.5)"/><circle cx="93.20" cy="36.00" r="4.14" fill="none" stroke="#3e3ca4" stroke-width="1.05" stroke-dasharray="1.21 0.65"/><circle cx="107.10" cy="36.00" r="4.14" fill="none" stroke="#6a6ad0" stroke-width="1.05" stroke-dasharray="1.21 0.65"/><circle cx="121.00" cy="36.00" r="2.97" fill="none" stroke="#5860c8" stroke-width="1.25"/><circle cx="121.00" cy="36.00" r="3.87" fill="none" stroke="#5860c8" stroke-width="1.0" stroke-dasharray="1.67 1.37"/><circle cx="134.20" cy="36.00" r="3.24" fill="#5c64cc"/><circle cx="134.20" cy="36.00" r="3.87" fill="none" stroke="#5c64cc" stroke-width="1.1" stroke-dasharray="1.67 1.37"/><circle cx="134.20" cy="36.00" r="0.6" fill="rgba(255,255,255,.5)"/><circle cx="146.70" cy="36.00" r="4.14" fill="none" stroke="#3e3ca4" stroke-width="1.05" stroke-dasharray="1.21 0.65"/><circle cx="79.30" cy="48.50" r="4.14" fill="none" stroke="#3e3ca4" stroke-width="1.05" stroke-dasharray="1.21 0.65"/><circle cx="93.20" cy="48.50" r="4.14" fill="none" stroke="#6a6ad0" stroke-width="1.05" stroke-dasharray="1.21 0.65"/><circle cx="107.10" cy="48.50" r="2.97" fill="none" stroke="#5860c8" stroke-width="1.25"/><circle cx="107.10" cy="48.50" r="3.87" fill="none" stroke="#5860c8" stroke-width="1.0" stroke-dasharray="1.67 1.37"/><circle cx="121.00" cy="48.50" r="3.24" fill="#5c64cc"/><circle cx="121.00" cy="48.50" r="3.87" fill="none" stroke="#5c64cc" stroke-width="1.1" stroke-dasharray="1.67 1.37"/><circle cx="121.00" cy="48.50" r="0.6" fill="rgba(255,255,255,.5)"/><circle cx="134.20" cy="48.50" r="4.14" fill="none" stroke="#3e3ca4" stroke-width="1.05" stroke-dasharray="1.21 0.65"/><circle cx="146.70" cy="48.50" r="4.14" fill="none" stroke="#6a6ad0" stroke-width="1.05" stroke-dasharray="1.21 0.65"/><circle cx="79.30" cy="60.30" r="4.14" fill="none" stroke="#6a6ad0" stroke-width="1.05" stroke-dasharray="1.21 0.65"/><circle cx="93.20" cy="60.30" r="2.97" fill="none" stroke="#5860c8" stroke-width="1.25"/><circle cx="93.20" cy="60.30" r="3.87" fill="none" stroke="#5860c8" stroke-width="1.0" stroke-dasharray="1.67 1.37"/><circle cx="107.10" cy="60.30" r="3.24" fill="#5c64cc"/><circle cx="107.10" cy="60.30" r="3.87" fill="none" stroke="#5c64cc" stroke-width="1.1" stroke-dasharray="1.67 1.37"/><circle cx="107.10" cy="60.30" r="0.6" fill="rgba(255,255,255,.5)"/><circle cx="121.00" cy="60.30" r="4.14" fill="none" stroke="#3e3ca4" stroke-width="1.05" stroke-dasharray="1.21 0.65"/><circle cx="134.20" cy="60.30" r="4.14" fill="none" stroke="#6a6ad0" stroke-width="1.05" stroke-dasharray="1.21 0.65"/><circle cx="146.70" cy="60.30" r="2.97" fill="none" stroke="#5860c8" stroke-width="1.25"/><circle cx="146.70" cy="60.30" r="3.87" fill="none" stroke="#5860c8" stroke-width="1.0" stroke-dasharray="1.67 1.37"/><circle cx="79.30" cy="72.00" r="2.97" fill="none" stroke="#5860c8" stroke-width="1.25"/><circle cx="79.30" cy="72.00" r="3.87" fill="none" stroke="#5860c8" stroke-width="1.0" stroke-dasharray="1.67 1.37"/><circle cx="93.20" cy="72.00" r="3.24" fill="#5c64cc"/><circle cx="93.20" cy="72.00" r="3.87" fill="none" stroke="#5c64cc" stroke-width="1.1" stroke-dasharray="1.67 1.37"/><circle cx="93.20" cy="72.00" r="0.6" fill="rgba(255,255,255,.5)"/><circle cx="107.10" cy="72.00" r="4.14" fill="none" stroke="#3e3ca4" stroke-width="1.05" stroke-dasharray="1.21 0.65"/><circle cx="121.00" cy="72.00" r="4.14" fill="none" stroke="#6a6ad0" stroke-width="1.05" stroke-dasharray="1.21 0.65"/><circle cx="134.20" cy="72.00" r="2.97" fill="none" stroke="#5860c8" stroke-width="1.25"/><circle cx="134.20" cy="72.00" r="3.87" fill="none" stroke="#5860c8" stroke-width="1.0" stroke-dasharray="1.67 1.37"/><circle cx="146.70" cy="72.00" r="3.24" fill="#5c64cc"/><circle cx="146.70" cy="72.00" r="3.87" fill="none" stroke="#5c64cc" stroke-width="1.1" stroke-dasharray="1.67 1.37"/><circle cx="146.70" cy="72.00" r="0.6" fill="rgba(255,255,255,.5)"/><circle cx="79.30" cy="82.50" r="3.24" fill="#5c64cc"/><circle cx="79.30" cy="82.50" r="3.87" fill="none" stroke="#5c64cc" stroke-width="1.1" stroke-dasharray="1.67 1.37"/><circle cx="79.30" cy="82.50" r="0.6" fill="rgba(255,255,255,.5)"/><circle cx="93.20" cy="82.50" r="4.14" fill="none" stroke="#3e3ca4" stroke-width="1.05" stroke-dasharray="1.21 0.65"/><circle cx="107.10" cy="82.50" r="4.14" fill="none" stroke="#6a6ad0" stroke-width="1.05" stroke-dasharray="1.21 0.65"/><circle cx="121.00" cy="82.50" r="2.97" fill="none" stroke="#5860c8" stroke-width="1.25"/><circle cx="121.00" cy="82.50" r="3.87" fill="none" stroke="#5860c8" stroke-width="1.0" stroke-dasharray="1.67 1.37"/><circle cx="134.20" cy="82.50" r="3.24" fill="#5c64cc"/><circle cx="134.20" cy="82.50" r="3.87" fill="none" stroke="#5c64cc" stroke-width="1.1" stroke-dasharray="1.67 1.37"/><circle cx="134.20" cy="82.50" r="0.6" fill="rgba(255,255,255,.5)"/><circle cx="146.70" cy="82.50" r="4.14" fill="none" stroke="#3e3ca4" stroke-width="1.05" stroke-dasharray="1.21 0.65"/></g></svg><div class="a" style="left:3.6px;top:25.8px;width:1px;height:1px;background:rgba(235,235,255,.42)"></div><div class="a" style="left:3.6px;top:30.5px;width:1px;height:1px;background:rgba(235,235,255,.42)"></div><div class="a" style="left:3.6px;top:35.2px;width:1px;height:1px;background:rgba(235,235,255,.42)"></div><div class="a" style="left:3.6px;top:39.900000000000006px;width:1px;height:1px;background:rgba(235,235,255,.42)"></div><div class="a" style="left:3.6px;top:44.6px;width:1px;height:1px;background:rgba(235,235,255,.42)"></div><div class="a" style="left:6.3px;top:25.8px;width:66px;height:1.1px;background:rgba(235,235,255,.42)"></div><div class="a" style="left:6.3px;top:30.3px;width:44px;height:1.1px;background:rgba(235,235,255,.42)"></div><div class="a" style="left:6.3px;top:35.1px;width:62px;height:1.1px;background:rgba(235,235,255,.42)"></div><div class="a" style="left:6.3px;top:39.6px;width:67px;height:1.1px;background:rgba(235,235,255,.42)"></div><div class="a" style="left:6.3px;top:43.8px;width:56px;height:1.1px;background:rgba(235,235,255,.42)"></div><div class="a" style="left:10.6px;top:46.6px;width:42px;height:1.1px;background:rgba(235,235,255,.42)"></div><div class="a" style="left:7.5px;top:77.2px;width:22px;height:0.8px;background:rgba(220,220,240,.4)"></div></div>
<div class="t" style="left:28.60px;top:347.81px;font-size:6.2px;color:#f4f4ff;font-family:'Liberation Serif',serif;font-weight:700;transform:scaleX(0.7283);">Of note this year...</div>
<div class="a" style="left:24px;top:443px;width:149px;height:85px;background:#08025a;border-radius:4px;overflow:hidden;box-shadow:0 0 0 0.6px #cfcfcf"><svg class="a" style="left:0;top:0;filter:blur(0.35px)" width="149" height="85"><g opacity="1.0"><circle cx="79.30" cy="2.60" r="4.14" fill="none" stroke="#3e3ca4" stroke-width="1.05" stroke-dasharray="1.21 0.65"/><circle cx="93.20" cy="2.60" r="4.14" fill="none" stroke="#6a6ad0" stroke-width="1.05" stroke-dasharray="1.21 0.65"/><circle cx="107.10" cy="2.60" r="2.97" fill="none" stroke="#5860c8" stroke-width="1.25"/><circle cx="107.10" cy="2.60" r="3.87" fill="none" stroke="#5860c8" stroke-width="1.0" stroke-dasharray="1.67 1.37"/><circle cx="121.00" cy="2.60" r="3.24" fill="#5c64cc"/><circle cx="121.00" cy="2.60" r="3.87" fill="none" stroke="#5c64cc" stroke-width="1.1" stroke-dasharray="1.67 1.37"/><circle cx="121.00" cy="2.60" r="0.6" fill="rgba(255,255,255,.5)"/><circle cx="134.20" cy="2.60" r="4.14" fill="none" stroke="#3e3ca4" stroke-width="1.05" stroke-dasharray="1.21 0.65"/><circle cx="146.70" cy="2.60" r="4.14" fill="none" stroke="#6a6ad0" stroke-width="1.05" stroke-dasharray="1.21 0.65"/><circle cx="79.30" cy="12.40" r="4.14" fill="none" stroke="#6a6ad0" stroke-width="1.05" stroke-dasharray="1.21 0.65"/><circle cx="93.20" cy="12.40" r="2.97" fill="none" stroke="#5860c8" stroke-width="1.25"/><circle cx="93.20" cy="12.40" r="3.87" fill="none" stroke="#5860c8" stroke-width="1.0" stroke-dasharray="1.67 1.37"/><circle cx="107.10" cy="12.40" r="3.24" fill="#5c64cc"/><circle cx="107.10" cy="12.40" r="3.87" fill="none" stroke="#5c64cc" stroke-width="1.1" stroke-dasharray="1.67 1.37"/><circle cx="107.10" cy="12.40" r="0.6" fill="rgba(255,255,255,.5)"/><circle cx="121.00" cy="12.40" r="4.14" fill="none" stroke="#3e3ca4" stroke-width="1.05" stroke-dasharray="1.21 0.65"/><circle cx="134.20" cy="12.40" r="4.14" fill="none" stroke="#6a6ad0" stroke-width="1.05" stroke-dasharray="1.21 0.65"/><circle cx="146.70" cy="12.40" r="2.97" fill="none" stroke="#5860c8" stroke-width="1.25"/><circle cx="146.70" cy="12.40" r="3.87" fill="none" stroke="#5860c8" stroke-width="1.0" stroke-dasharray="1.67 1.37"/><circle cx="79.30" cy="24.20" r="2.97" fill="none" stroke="#5860c8" stroke-width="1.25"/><circle cx="79.30" cy="24.20" r="3.87" fill="none" stroke="#5860c8" stroke-width="1.0" stroke-dasharray="1.67 1.37"/><circle cx="93.20" cy="24.20" r="3.24" fill="#5c64cc"/><circle cx="93.20" cy="24.20" r="3.87" fill="none" stroke="#5c64cc" stroke-width="1.1" stroke-dasharray="1.67 1.37"/><circle cx="93.20" cy="24.20" r="0.6" fill="rgba(255,255,255,.5)"/><circle cx="107.10" cy="24.20" r="4.14" fill="none" stroke="#3e3ca4" stroke-width="1.05" stroke-dasharray="1.21 0.65"/><circle cx="121.00" cy="24.20" r="4.14" fill="none" stroke="#6a6ad0" stroke-width="1.05" stroke-dasharray="1.21 0.65"/><circle cx="134.20" cy="24.20" r="2.97" fill="none" stroke="#5860c8" stroke-width="1.25"/><circle cx="134.20" cy="24.20" r="3.87" fill="none" stroke="#5860c8" stroke-width="1.0" stroke-dasharray="1.67 1.37"/><circle cx="146.70" cy="24.20" r="3.24" fill="#5c64cc"/><circle cx="146.70" cy="24.20" r="3.87" fill="none" stroke="#5c64cc" stroke-width="1.1" stroke-dasharray="1.67 1.37"/><circle cx="146.70" cy="24.20" r="0.6" fill="rgba(255,255,255,.5)"/><circle cx="79.30" cy="36.00" r="3.24" fill="#5c64cc"/><circle cx="79.30" cy="36.00" r="3.87" fill="none" stroke="#5c64cc" stroke-width="1.1" stroke-dasharray="1.67 1.37"/><circle cx="79.30" cy="36.00" r="0.6" fill="rgba(255,255,255,.5)"/><circle cx="93.20" cy="36.00" r="4.14" fill="none" stroke="#3e3ca4" stroke-width="1.05" stroke-dasharray="1.21 0.65"/><circle cx="107.10" cy="36.00" r="4.14" fill="none" stroke="#6a6ad0" stroke-width="1.05" stroke-dasharray="1.21 0.65"/><circle cx="121.00" cy="36.00" r="2.97" fill="none" stroke="#5860c8" stroke-width="1.25"/><circle cx="121.00" cy="36.00" r="3.87" fill="none" stroke="#5860c8" stroke-width="1.0" stroke-dasharray="1.67 1.37"/><circle cx="134.20" cy="36.00" r="3.24" fill="#5c64cc"/><circle cx="134.20" cy="36.00" r="3.87" fill="none" stroke="#5c64cc" stroke-width="1.1" stroke-dasharray="1.67 1.37"/><circle cx="134.20" cy="36.00" r="0.6" fill="rgba(255,255,255,.5)"/><circle cx="146.70" cy="36.00" r="4.14" fill="none" stroke="#3e3ca4" stroke-width="1.05" stroke-dasharray="1.21 0.65"/><circle cx="79.30" cy="48.50" r="4.14" fill="none" stroke="#3e3ca4" stroke-width="1.05" stroke-dasharray="1.21 0.65"/><circle cx="93.20" cy="48.50" r="4.14" fill="none" stroke="#6a6ad0" stroke-width="1.05" stroke-dasharray="1.21 0.65"/><circle cx="107.10" cy="48.50" r="2.97" fill="none" stroke="#5860c8" stroke-width="1.25"/><circle cx="107.10" cy="48.50" r="3.87" fill="none" stroke="#5860c8" stroke-width="1.0" stroke-dasharray="1.67 1.37"/><circle cx="121.00" cy="48.50" r="3.24" fill="#5c64cc"/><circle cx="121.00" cy="48.50" r="3.87" fill="none" stroke="#5c64cc" stroke-width="1.1" stroke-dasharray="1.67 1.37"/><circle cx="121.00" cy="48.50" r="0.6" fill="rgba(255,255,255,.5)"/><circle cx="134.20" cy="48.50" r="4.14" fill="none" stroke="#3e3ca4" stroke-width="1.05" stroke-dasharray="1.21 0.65"/><circle cx="146.70" cy="48.50" r="4.14" fill="none" stroke="#6a6ad0" stroke-width="1.05" stroke-dasharray="1.21 0.65"/><circle cx="79.30" cy="60.30" r="4.14" fill="none" stroke="#6a6ad0" stroke-width="1.05" stroke-dasharray="1.21 0.65"/><circle cx="93.20" cy="60.30" r="2.97" fill="none" stroke="#5860c8" stroke-width="1.25"/><circle cx="93.20" cy="60.30" r="3.87" fill="none" stroke="#5860c8" stroke-width="1.0" stroke-dasharray="1.67 1.37"/><circle cx="107.10" cy="60.30" r="3.24" fill="#5c64cc"/><circle cx="107.10" cy="60.30" r="3.87" fill="none" stroke="#5c64cc" stroke-width="1.1" stroke-dasharray="1.67 1.37"/><circle cx="107.10" cy="60.30" r="0.6" fill="rgba(255,255,255,.5)"/><circle cx="121.00" cy="60.30" r="4.14" fill="none" stroke="#3e3ca4" stroke-width="1.05" stroke-dasharray="1.21 0.65"/><circle cx="134.20" cy="60.30" r="4.14" fill="none" stroke="#6a6ad0" stroke-width="1.05" stroke-dasharray="1.21 0.65"/><circle cx="146.70" cy="60.30" r="2.97" fill="none" stroke="#5860c8" stroke-width="1.25"/><circle cx="146.70" cy="60.30" r="3.87" fill="none" stroke="#5860c8" stroke-width="1.0" stroke-dasharray="1.67 1.37"/><circle cx="79.30" cy="72.80" r="2.97" fill="none" stroke="#5860c8" stroke-width="1.25"/><circle cx="79.30" cy="72.80" r="3.87" fill="none" stroke="#5860c8" stroke-width="1.0" stroke-dasharray="1.67 1.37"/><circle cx="93.20" cy="72.80" r="3.24" fill="#5c64cc"/><circle cx="93.20" cy="72.80" r="3.87" fill="none" stroke="#5c64cc" stroke-width="1.1" stroke-dasharray="1.67 1.37"/><circle cx="93.20" cy="72.80" r="0.6" fill="rgba(255,255,255,.5)"/><circle cx="107.10" cy="72.80" r="4.14" fill="none" stroke="#3e3ca4" stroke-width="1.05" stroke-dasharray="1.21 0.65"/><circle cx="121.00" cy="72.80" r="4.14" fill="none" stroke="#6a6ad0" stroke-width="1.05" stroke-dasharray="1.21 0.65"/><circle cx="134.20" cy="72.80" r="2.97" fill="none" stroke="#5860c8" stroke-width="1.25"/><circle cx="134.20" cy="72.80" r="3.87" fill="none" stroke="#5860c8" stroke-width="1.0" stroke-dasharray="1.67 1.37"/><circle cx="146.70" cy="72.80" r="3.24" fill="#5c64cc"/><circle cx="146.70" cy="72.80" r="3.87" fill="none" stroke="#5c64cc" stroke-width="1.1" stroke-dasharray="1.67 1.37"/><circle cx="146.70" cy="72.80" r="0.6" fill="rgba(255,255,255,.5)"/><circle cx="79.30" cy="82.50" r="3.24" fill="#5c64cc"/><circle cx="79.30" cy="82.50" r="3.87" fill="none" stroke="#5c64cc" stroke-width="1.1" stroke-dasharray="1.67 1.37"/><circle cx="79.30" cy="82.50" r="0.6" fill="rgba(255,255,255,.5)"/><circle cx="93.20" cy="82.50" r="4.14" fill="none" stroke="#3e3ca4" stroke-width="1.05" stroke-dasharray="1.21 0.65"/><circle cx="107.10" cy="82.50" r="4.14" fill="none" stroke="#6a6ad0" stroke-width="1.05" stroke-dasharray="1.21 0.65"/><circle cx="121.00" cy="82.50" r="2.97" fill="none" stroke="#5860c8" stroke-width="1.25"/><circle cx="121.00" cy="82.50" r="3.87" fill="none" stroke="#5860c8" stroke-width="1.0" stroke-dasharray="1.67 1.37"/><circle cx="134.20" cy="82.50" r="3.24" fill="#5c64cc"/><circle cx="134.20" cy="82.50" r="3.87" fill="none" stroke="#5c64cc" stroke-width="1.1" stroke-dasharray="1.67 1.37"/><circle cx="134.20" cy="82.50" r="0.6" fill="rgba(255,255,255,.5)"/><circle cx="146.70" cy="82.50" r="4.14" fill="none" stroke="#3e3ca4" stroke-width="1.05" stroke-dasharray="1.21 0.65"/></g></svg><div class="a" style="left:5px;top:12.2px;width:52px;height:1.1px;background:rgba(235,235,255,.42)"></div><div class="a" style="left:5px;top:16px;width:56px;height:1.1px;background:rgba(235,235,255,.42)"></div><div class="a" style="left:5px;top:20.6px;width:29px;height:1.1px;background:rgba(235,235,255,.42)"></div><div class="a" style="left:7px;top:24.1px;width:65px;height:1.1px;background:rgba(235,235,255,.42)"></div><div class="a" style="left:5px;top:28px;width:43px;height:1.1px;background:rgba(235,235,255,.42)"></div><div class="a" style="left:5px;top:32.8px;width:48px;height:1.1px;background:rgba(235,235,255,.42)"></div><div class="a" style="left:5px;top:37.5px;width:38px;height:1.1px;background:rgba(235,235,255,.42)"></div><div class="a" style="left:5px;top:42px;width:37.5px;height:1.1px;background:rgba(235,235,255,.42)"></div><div class="a" style="left:5px;top:46.3px;width:54px;height:1.1px;background:rgba(235,235,255,.42)"></div><div class="a" style="left:7.5px;top:77.5px;width:23px;height:0.8px;background:rgba(220,220,240,.4)"></div></div>
<div class="t" style="left:29.00px;top:504.14px;font-size:6.4px;color:#f4f4ff;font-family:'Liberation Serif',serif;font-weight:700;transform:scaleX(0.8824);">Important Dates</div>
<div class="a" style="left:24px;top:542px;width:149px;height:85px;background:#f9f5ee;border-radius:4px;overflow:hidden;box-shadow:0 0 0 0.6px #cfcfcf"><svg class="a" style="left:0;top:0;filter:blur(0.35px)" width="149" height="85"><g opacity="1.0"><circle cx="79.30" cy="2.00" r="4.14" fill="none" stroke="#d8d3e2" stroke-width="0.9" stroke-dasharray="1.21 0.65"/><circle cx="93.20" cy="2.00" r="4.14" fill="none" stroke="#9a92bc" stroke-width="0.9" stroke-dasharray="1.21 0.65"/><circle cx="107.10" cy="2.00" r="2.97" fill="none" stroke="#9696da" stroke-width="1.25"/><circle cx="107.10" cy="2.00" r="3.87" fill="none" stroke="#9696da" stroke-width="1.0" stroke-dasharray="1.67 1.37"/><circle cx="121.00" cy="2.00" r="3.24" fill="#9ca2ee"/><circle cx="121.00" cy="2.00" r="3.87" fill="none" stroke="#9ca2ee" stroke-width="1.1" stroke-dasharray="1.67 1.37"/><circle cx="121.00" cy="2.00" r="0.6" fill="rgba(255,255,255,.5)"/><circle cx="134.20" cy="2.00" r="4.14" fill="none" stroke="#d8d3e2" stroke-width="0.9" stroke-dasharray="1.21 0.65"/><circle cx="146.70" cy="2.00" r="4.14" fill="none" stroke="#9a92bc" stroke-width="0.9" stroke-dasharray="1.21 0.65"/><circle cx="79.30" cy="12.40" r="4.14" fill="none" stroke="#9a92bc" stroke-width="0.9" stroke-dasharray="1.21 0.65"/><circle cx="93.20" cy="12.40" r="2.97" fill="none" stroke="#9696da" stroke-width="1.25"/><circle cx="93.20" cy="12.40" r="3.87" fill="none" stroke="#9696da" stroke-width="1.0" stroke-dasharray="1.67 1.37"/><circle cx="107.10" cy="12.40" r="3.24" fill="#9ca2ee"/><circle cx="107.10" cy="12.40" r="3.87" fill="none" stroke="#9ca2ee" stroke-width="1.1" stroke-dasharray="1.67 1.37"/><circle cx="107.10" cy="12.40" r="0.6" fill="rgba(255,255,255,.5)"/><circle cx="121.00" cy="12.40" r="4.14" fill="none" stroke="#d8d3e2" stroke-width="0.9" stroke-dasharray="1.21 0.65"/><circle cx="134.20" cy="12.40" r="4.14" fill="none" stroke="#9a92bc" stroke-width="0.9" stroke-dasharray="1.21 0.65"/><circle cx="146.70" cy="12.40" r="2.97" fill="none" stroke="#9696da" stroke-width="1.25"/><circle cx="146.70" cy="12.40" r="3.87" fill="none" stroke="#9696da" stroke-width="1.0" stroke-dasharray="1.67 1.37"/><circle cx="79.30" cy="24.20" r="2.97" fill="none" stroke="#9696da" stroke-width="1.25"/><circle cx="79.30" cy="24.20" r="3.87" fill="none" stroke="#9696da" stroke-width="1.0" stroke-dasharray="1.67 1.37"/><circle cx="93.20" cy="24.20" r="3.24" fill="#9ca2ee"/><circle cx="93.20" cy="24.20" r="3.87" fill="none" stroke="#9ca2ee" stroke-width="1.1" stroke-dasharray="1.67 1.37"/><circle cx="93.20" cy="24.20" r="0.6" fill="rgba(255,255,255,.5)"/><circle cx="107.10" cy="24.20" r="4.14" fill="none" stroke="#d8d3e2" stroke-width="0.9" stroke-dasharray="1.21 0.65"/><circle cx="121.00" cy="24.20" r="4.14" fill="none" stroke="#9a92bc" stroke-width="0.9" stroke-dasharray="1.21 0.65"/><circle cx="134.20" cy="24.20" r="2.97" fill="none" stroke="#9696da" stroke-width="1.25"/><circle cx="134.20" cy="24.20" r="3.87" fill="none" stroke="#9696da" stroke-width="1.0" stroke-dasharray="1.67 1.37"/><circle cx="146.70" cy="24.20" r="3.24" fill="#9ca2ee"/><circle cx="146.70" cy="24.20" r="3.87" fill="none" stroke="#9ca2ee" stroke-width="1.1" stroke-dasharray="1.67 1.37"/><circle cx="146.70" cy="24.20" r="0.6" fill="rgba(255,255,255,.5)"/><circle cx="79.30" cy="36.00" r="3.24" fill="#9ca2ee"/><circle cx="79.30" cy="36.00" r="3.87" fill="none" stroke="#9ca2ee" stroke-width="1.1" stroke-dasharray="1.67 1.37"/><circle cx="79.30" cy="36.00" r="0.6" fill="rgba(255,255,255,.5)"/><circle cx="93.20" cy="36.00" r="4.14" fill="none" stroke="#d8d3e2" stroke-width="0.9" stroke-dasharray="1.21 0.65"/><circle cx="107.10" cy="36.00" r="4.14" fill="none" stroke="#9a92bc" stroke-width="0.9" stroke-dasharray="1.21 0.65"/><circle cx="121.00" cy="36.00" r="2.97" fill="none" stroke="#9696da" stroke-width="1.25"/><circle cx="121.00" cy="36.00" r="3.87" fill="none" stroke="#9696da" stroke-width="1.0" stroke-dasharray="1.67 1.37"/><circle cx="134.20" cy="36.00" r="3.24" fill="#9ca2ee"/><circle cx="134.20" cy="36.00" r="3.87" fill="none" stroke="#9ca2ee" stroke-width="1.1" stroke-dasharray="1.67 1.37"/><circle cx="134.20" cy="36.00" r="0.6" fill="rgba(255,255,255,.5)"/><circle cx="146.70" cy="36.00" r="4.14" fill="none" stroke="#d8d3e2" stroke-width="0.9" stroke-dasharray="1.21 0.65"/><circle cx="79.30" cy="48.50" r="4.14" fill="none" stroke="#d8d3e2" stroke-width="0.9" stroke-dasharray="1.21 0.65"/><circle cx="93.20" cy="48.50" r="4.14" fill="none" stroke="#9a92bc" stroke-width="0.9" stroke-dasharray="1.21 0.65"/><circle cx="107.10" cy="48.50" r="2.97" fill="none" stroke="#9696da" stroke-width="1.25"/><circle cx="107.10" cy="48.50" r="3.87" fill="none" stroke="#9696da" stroke-width="1.0" stroke-dasharray="1.67 1.37"/><circle cx="121.00" cy="48.50" r="3.24" fill="#9ca2ee"/><circle cx="121.00" cy="48.50" r="3.87" fill="none" stroke="#9ca2ee" stroke-width="1.1" stroke-dasharray="1.67 1.37"/><circle cx="121.00" cy="48.50" r="0.6" fill="rgba(255,255,255,.5)"/><circle cx="134.20" cy="48.50" r="4.14" fill="none" stroke="#d8d3e2" stroke-width="0.9" stroke-dasharray="1.21 0.65"/><circle cx="146.70" cy="48.50" r="4.14" fill="none" stroke="#9a92bc" stroke-width="0.9" stroke-dasharray="1.21 0.65"/><circle cx="79.30" cy="60.30" r="4.14" fill="none" stroke="#9a92bc" stroke-width="0.9" stroke-dasharray="1.21 0.65"/><circle cx="93.20" cy="60.30" r="2.97" fill="none" stroke="#9696da" stroke-width="1.25"/><circle cx="93.20" cy="60.30" r="3.87" fill="none" stroke="#9696da" stroke-width="1.0" stroke-dasharray="1.67 1.37"/><circle cx="107.10" cy="60.30" r="3.24" fill="#9ca2ee"/><circle cx="107.10" cy="60.30" r="3.87" fill="none" stroke="#9ca2ee" stroke-width="1.1" stroke-dasharray="1.67 1.37"/><circle cx="107.10" cy="60.30" r="0.6" fill="rgba(255,255,255,.5)"/><circle cx="121.00" cy="60.30" r="4.14" fill="none" stroke="#d8d3e2" stroke-width="0.9" stroke-dasharray="1.21 0.65"/><circle cx="134.20" cy="60.30" r="4.14" fill="none" stroke="#9a92bc" stroke-width="0.9" stroke-dasharray="1.21 0.65"/><circle cx="146.70" cy="60.30" r="2.97" fill="none" stroke="#9696da" stroke-width="1.25"/><circle cx="146.70" cy="60.30" r="3.87" fill="none" stroke="#9696da" stroke-width="1.0" stroke-dasharray="1.67 1.37"/><circle cx="79.30" cy="72.80" r="2.97" fill="none" stroke="#9696da" stroke-width="1.25"/><circle cx="79.30" cy="72.80" r="3.87" fill="none" stroke="#9696da" stroke-width="1.0" stroke-dasharray="1.67 1.37"/><circle cx="93.20" cy="72.80" r="3.24" fill="#9ca2ee"/><circle cx="93.20" cy="72.80" r="3.87" fill="none" stroke="#9ca2ee" stroke-width="1.1" stroke-dasharray="1.67 1.37"/><circle cx="93.20" cy="72.80" r="0.6" fill="rgba(255,255,255,.5)"/><circle cx="107.10" cy="72.80" r="4.14" fill="none" stroke="#d8d3e2" stroke-width="0.9" stroke-dasharray="1.21 0.65"/><circle cx="121.00" cy="72.80" r="4.14" fill="none" stroke="#9a92bc" stroke-width="0.9" stroke-dasharray="1.21 0.65"/><circle cx="134.20" cy="72.80" r="2.97" fill="none" stroke="#9696da" stroke-width="1.25"/><circle cx="134.20" cy="72.80" r="3.87" fill="none" stroke="#9696da" stroke-width="1.0" stroke-dasharray="1.67 1.37"/><circle cx="146.70" cy="72.80" r="3.24" fill="#9ca2ee"/><circle cx="146.70" cy="72.80" r="3.87" fill="none" stroke="#9ca2ee" stroke-width="1.1" stroke-dasharray="1.67 1.37"/><circle cx="146.70" cy="72.80" r="0.6" fill="rgba(255,255,255,.5)"/><circle cx="79.30" cy="82.50" r="3.24" fill="#9ca2ee"/><circle cx="79.30" cy="82.50" r="3.87" fill="none" stroke="#9ca2ee" stroke-width="1.1" stroke-dasharray="1.67 1.37"/><circle cx="79.30" cy="82.50" r="0.6" fill="rgba(255,255,255,.5)"/><circle cx="93.20" cy="82.50" r="4.14" fill="none" stroke="#d8d3e2" stroke-width="0.9" stroke-dasharray="1.21 0.65"/><circle cx="107.10" cy="82.50" r="4.14" fill="none" stroke="#9a92bc" stroke-width="0.9" stroke-dasharray="1.21 0.65"/><circle cx="121.00" cy="82.50" r="2.97" fill="none" stroke="#9696da" stroke-width="1.25"/><circle cx="121.00" cy="82.50" r="3.87" fill="none" stroke="#9696da" stroke-width="1.0" stroke-dasharray="1.67 1.37"/><circle cx="134.20" cy="82.50" r="3.24" fill="#9ca2ee"/><circle cx="134.20" cy="82.50" r="3.87" fill="none" stroke="#9ca2ee" stroke-width="1.1" stroke-dasharray="1.67 1.37"/><circle cx="134.20" cy="82.50" r="0.6" fill="rgba(255,255,255,.5)"/><circle cx="146.70" cy="82.50" r="4.14" fill="none" stroke="#d8d3e2" stroke-width="0.9" stroke-dasharray="1.21 0.65"/></g></svg><div class="a" style="left:8.5px;top:18.9px;width:59.7px;height:1.1px;background:rgba(70,70,70,.42)"></div><div class="a" style="left:12.5px;top:21.5px;width:2px;height:1.5px;background:rgba(40,40,40,.6)"></div><div class="a" style="left:15px;top:21.5px;width:6px;height:1px;background:rgba(70,70,70,.42)"></div><div class="a" style="left:12.5px;top:24.5px;width:2px;height:1.5px;background:rgba(40,40,40,.6)"></div><div class="a" style="left:15px;top:24.5px;width:6px;height:1px;background:rgba(70,70,70,.42)"></div><div class="a" style="left:12.5px;top:27.2px;width:2px;height:1.5px;background:rgba(40,40,40,.6)"></div><div class="a" style="left:15px;top:27.2px;width:6px;height:1px;background:rgba(70,70,70,.42)"></div><div class="a" style="left:12.5px;top:30.7px;width:2px;height:1.5px;background:rgba(40,40,40,.6)"></div><div class="a" style="left:15px;top:30.7px;width:6px;height:1px;background:rgba(70,70,70,.42)"></div><div class="a" style="left:8.5px;top:36.7px;width:57.5px;height:1.1px;background:rgba(70,70,70,.42)"></div><div class="a" style="left:8.5px;top:39px;width:63.5px;height:1.1px;background:rgba(70,70,70,.42)"></div><div class="a" style="left:8.5px;top:42.5px;width:60.5px;height:1.1px;background:rgba(70,70,70,.42)"></div><div class="a" style="left:8.5px;top:45.3px;width:42.5px;height:1.1px;background:rgba(70,70,70,.42)"></div><div class="a" style="left:6px;top:18.9px;width:1.5px;height:1.1px;background:rgba(70,70,70,.42)"></div><div class="a" style="left:6px;top:36.7px;width:1.5px;height:1.1px;background:rgba(70,70,70,.42)"></div><div class="a" style="left:6px;top:42.5px;width:1.5px;height:1.1px;background:rgba(70,70,70,.42)"></div><div class="a" style="left:6px;top:45.3px;width:1.5px;height:1.1px;background:rgba(70,70,70,.42)"></div><div class="a" style="left:7.5px;top:77.5px;width:23px;height:0.8px;background:rgba(90,90,90,.45)"></div></div>
<div class="t" style="left:30.80px;top:547.34px;font-size:7.6px;color:#1e1e1e;font-family:'Liberation Serif',serif;font-weight:700;transform:scaleX(1.0806);">4 Journeys</div>
<div class="a" style="left:24px;top:641px;width:149px;height:48px;background:#f9f5ee;border-radius:4px 4px 0 0;overflow:hidden;box-shadow:0 0 0 0.6px #cfcfcf"><div class="a" style="left:4.5px;top:13.5px;width:0.8px;height:13px;background:#444"></div><div class="a" style="left:4px;top:13.3px;width:15.6px;height:5.2px;border:0.7px solid #666;background:#fff"></div><div class="a" style="left:5.2px;top:15.6px;width:8.58px;height:0.7px;background:rgba(80,80,80,.5)"></div><div class="a" style="left:46.5px;top:13.3px;width:12px;height:5.2px;border:0.7px solid #666;background:#fff"></div><div class="a" style="left:47.7px;top:15.6px;width:6.6000000000000005px;height:0.7px;background:rgba(80,80,80,.5)"></div><div class="a" style="left:61.4px;top:13.3px;width:15px;height:5.2px;border:0.7px solid #666;background:#fff"></div><div class="a" style="left:62.6px;top:15.6px;width:8.25px;height:0.7px;background:rgba(80,80,80,.5)"></div><div class="a" style="left:78px;top:13.3px;width:14.8px;height:5.2px;border:0.9px solid #222;background:#fff"></div><div class="a" style="left:79.2px;top:15.6px;width:8.14px;height:0.7px;background:rgba(80,80,80,.5)"></div><div class="a" style="left:94.2px;top:13.3px;width:11.4px;height:5.2px;border:0.9px solid #222;background:#fff"></div><div class="a" style="left:95.4px;top:15.6px;width:6.2700000000000005px;height:0.7px;background:rgba(80,80,80,.5)"></div><div class="a" style="left:4px;top:26.6px;width:140px;height:0.6px;background:#9a9a9a"></div><div class="a" style="left:11.6px;top:19.7px;width:11.9px;height:6px;background:#0c0a6a"></div><div class="a" style="left:12.799999999999999px;top:21.3px;width:6.545000000000001px;height:0.8px;background:rgba(255,255,255,.55)"></div><div class="a" style="left:12.799999999999999px;top:23.099999999999998px;width:5.355px;height:0.8px;background:rgba(255,255,255,.45)"></div><div class="a" style="left:24.2px;top:19.7px;width:10.3px;height:6px;background:#0c0a6a"></div><div class="a" style="left:25.4px;top:21.3px;width:5.665000000000001px;height:0.8px;background:rgba(255,255,255,.55)"></div><div class="a" style="left:25.4px;top:23.099999999999998px;width:4.635000000000001px;height:0.8px;background:rgba(255,255,255,.45)"></div><div class="a" style="left:41.2px;top:19.7px;width:17.199999999999996px;height:6px;background:#0c0a6a"></div><div class="a" style="left:42.400000000000006px;top:21.3px;width:9.459999999999999px;height:0.8px;background:rgba(255,255,255,.55)"></div><div class="a" style="left:42.400000000000006px;top:23.099999999999998px;width:7.739999999999998px;height:0.8px;background:rgba(255,255,255,.45)"></div><div class="a" style="left:61.6px;top:19.7px;width:15.399999999999999px;height:6px;background:#0c0a6a"></div><div class="a" style="left:62.800000000000004px;top:21.3px;width:8.47px;height:0.8px;background:rgba(255,255,255,.55)"></div><div class="a" style="left:62.800000000000004px;top:23.099999999999998px;width:6.93px;height:0.8px;background:rgba(255,255,255,.45)"></div><div class="a" style="left:77.6px;top:19.7px;width:14.300000000000011px;height:6px;background:#0c0a6a"></div><div class="a" style="left:78.8px;top:21.3px;width:7.865000000000007px;height:0.8px;background:rgba(255,255,255,.55)"></div><div class="a" style="left:78.8px;top:23.099999999999998px;width:6.435000000000005px;height:0.8px;background:rgba(255,255,255,.45)"></div><div class="a" style="left:95px;top:19.7px;width:9.299999999999997px;height:6px;background:#0c0a6a"></div><div class="a" style="left:96.2px;top:21.3px;width:5.114999999999998px;height:0.8px;background:rgba(255,255,255,.55)"></div><div class="a" style="left:96.2px;top:23.099999999999998px;width:4.184999999999999px;height:0.8px;background:rgba(255,255,255,.45)"></div><div class="a" style="left:111px;top:19.7px;width:13px;height:6px;background:#0c0a6a"></div><div class="a" style="left:112.2px;top:21.3px;width:7.15px;height:0.8px;background:rgba(255,255,255,.55)"></div><div class="a" style="left:112.2px;top:23.099999999999998px;width:5.8500000000000005px;height:0.8px;background:rgba(255,255,255,.45)"></div><div class="a" style="left:131.3px;top:19.7px;width:11.5px;height:6px;background:#0c0a6a"></div><div class="a" style="left:132.5px;top:21.3px;width:6.325px;height:0.8px;background:rgba(255,255,255,.55)"></div><div class="a" style="left:132.5px;top:23.099999999999998px;width:5.175px;height:0.8px;background:rgba(255,255,255,.45)"></div><div class="a" style="left:11.6px;top:29.3px;width:12.4px;height:5.5px;background:#0c0a6a"></div><div class="a" style="left:12.799999999999999px;top:30.900000000000002px;width:6.820000000000001px;height:0.8px;background:rgba(255,255,255,.55)"></div><div class="a" style="left:12.799999999999999px;top:32.7px;width:5.58px;height:0.8px;background:rgba(255,255,255,.45)"></div><div class="a" style="left:28px;top:29.3px;width:12px;height:5.5px;background:#0c0a6a"></div><div class="a" style="left:29.2px;top:30.900000000000002px;width:6.6000000000000005px;height:0.8px;background:rgba(255,255,255,.55)"></div><div class="a" style="left:29.2px;top:32.7px;width:5.4px;height:0.8px;background:rgba(255,255,255,.45)"></div><div class="a" style="left:47px;top:29.3px;width:12px;height:5.5px;background:#0c0a6a"></div><div class="a" style="left:48.2px;top:30.900000000000002px;width:6.6000000000000005px;height:0.8px;background:rgba(255,255,255,.55)"></div><div class="a" style="left:48.2px;top:32.7px;width:5.4px;height:0.8px;background:rgba(255,255,255,.45)"></div><div class="a" style="left:64px;top:29.3px;width:12.700000000000003px;height:5.5px;background:#0c0a6a"></div><div class="a" style="left:65.2px;top:30.900000000000002px;width:6.985000000000002px;height:0.8px;background:rgba(255,255,255,.55)"></div><div class="a" style="left:65.2px;top:32.7px;width:5.715000000000002px;height:0.8px;background:rgba(255,255,255,.45)"></div><div class="a" style="left:4px;top:28px;width:3px;height:0.6px;background:rgba(90,90,90,.5)"></div><div class="a" style="left:20px;top:28px;width:3px;height:0.6px;background:rgba(90,90,90,.5)"></div><div class="a" style="left:40px;top:28px;width:3px;height:0.6px;background:rgba(90,90,90,.5)"></div><div class="a" style="left:57px;top:28px;width:3px;height:0.6px;background:rgba(90,90,90,.5)"></div><div class="a" style="left:76px;top:28px;width:3px;height:0.6px;background:rgba(90,90,90,.5)"></div><div class="a" style="left:95px;top:28px;width:3px;height:0.6px;background:rgba(90,90,90,.5)"></div><div class="a" style="left:115px;top:28px;width:3px;height:0.6px;background:rgba(90,90,90,.5)"></div><div class="a" style="left:138px;top:28px;width:3px;height:0.6px;background:rgba(90,90,90,.5)"></div></div>
<div class="a" style="left:323px;top:143px;width:20px;height:19.5px;background:#ffffff;border-radius:4px;box-shadow:0 0 0 0.5px #e6e6e6"></div>
<svg class="a" style="left:327px;top:147px" width="13" height="12" viewBox="0 0 13 12"><path d="M6.5 0.5l0.9 2.2 2.2 0.9-2.2 0.9-0.9 2.2-0.9-2.2-2.2-0.9 2.2-0.9z" fill="#222"/><path d="M9.5 4.5l0.8 1.8 -0.8 1.8 -0.8-1.8z" fill="#222"/><path d="M1.2 9.5l1-1.2M3 7.3l1-1.2M3.2 11l0.9-1.1M5 8.8l1-1.2" stroke="#333" stroke-width="0.9"/></svg>
<div class="a" style="left:1268px;top:135px;width:12px;height:523px;background:#f5f5f5"></div>
<svg class="a" style="left:1270px;top:137px" width="8" height="7" viewBox="0 0 8 7"><path d="M4 1.5L7 5.5H1z" fill="#7a7a7a"/></svg>
<div class="a" style="left:1271px;top:146px;width:6px;height:26px;background:#8a8a8a;border-radius:3px"></div>
<svg class="a" style="left:1270px;top:612px" width="8" height="30" viewBox="0 0 8 30" fill="#7a7a7a"><path d="M1 1.5h6L4 6z"/><path d="M4 11l3 4H1z M4 14l3 4H1z"/><path d="M1 22h6L4 26z M1 25h6L4 29z"/></svg>
<div class="a" style="left:202px;top:657.5px;width:1078px;height:1px;background:#d4d4d4"></div>
<div class="t" style="left:210.00px;top:664.56px;font-size:9.5px;color:#5c5c5c;transform:scaleX(1.0197);">Click to add notes</div>
<div class="a" style="left:0px;top:689px;width:1280px;height:15px;background:#f7f7f7"></div>
<div class="t" style="left:8.10px;top:692.60px;font-size:7.8px;color:#555;transform:scaleX(0.9593);">Slide 1 of 17</div>
<svg class="a" style="left:62px;top:691px" width="11" height="11" viewBox="0 0 11 11" fill="none" stroke="#555" stroke-width="0.9"><path d="M1.5 1v9h5M1.5 1h6v4"/><path d="M6 7l3 3M9 7l-3 3"/></svg>
<svg class="a" style="left:84px;top:690px" width="11" height="12" viewBox="0 0 11 12" fill="none" stroke="#555" stroke-width="0.9"><circle cx="4" cy="2.5" r="1.5"/><path d="M0.5 4.5h7M4 4.5v3l-2 3.5M4 7.5l2 3M6.5 9l1.5 1.5 2.5-3"/></svg>
<div class="t" style="left:96.60px;top:692.60px;font-size:7.8px;color:#444;transform:scaleX(0.9823);">Accessibility: Good to go</div>
<svg class="a" style="left:918px;top:691px" width="12" height="11" viewBox="0 0 12 11" fill="none" stroke="#444" stroke-width="0.9"><path d="M3.5 3l2.5-2 2.5 2M0.5 5h11M0.5 7.5h11M0.5 10h11"/></svg>
<div class="t" style="left:931.50px;top:692.60px;font-size:7.8px;color:#333;transform:scaleX(0.9668);">Notes</div>
<svg class="a" style="left:962px;top:691px" width="11" height="11" viewBox="0 0 11 11" fill="none" stroke="#444" stroke-width="0.9"><rect x="0.5" y="1" width="9" height="7"/><path d="M3 10h4"/><circle cx="7.5" cy="7" r="2.2" fill="#f7f7f7"/></svg>
<div class="t" style="left:974.20px;top:692.60px;font-size:7.8px;color:#333;transform:scaleX(0.9673);">Display Settings</div>
<div class="a" style="left:1041px;top:690px;width:27px;height:13.5px;background:#dedede;border-radius:2px"></div>
<svg class="a" style="left:1049px;top:692px;" width="11" height="10" viewBox="0 0 11 10"><rect x="0.5" y="0.5" width="10" height="9" fill="none" stroke="#333" stroke-width="0.9"/><path d="M3 0.5v9M3 7h7.5" stroke="#333" stroke-width="0.9"/></svg>
<svg class="a" style="left:1076px;top:692px;" width="11" height="10" viewBox="0 0 11 10"><g fill="none" stroke="#333" stroke-width="0.9"><rect x="0.5" y="0.5" width="4" height="3.5"/><rect x="6.5" y="0.5" width="4" height="3.5"/><rect x="0.5" y="6" width="4" height="3.5"/><rect x="6.5" y="6" width="4" height="3.5"/></g></svg>
<svg class="a" style="left:1102px;top:692px;" width="11" height="10" viewBox="0 0 11 10"><g fill="none" stroke="#333" stroke-width="0.9"><path d="M0.5 0.5h4.5v9H0.5z M5.5 0.5h5v9h-5z"/><path d="M2 3h2M7 3h2M2 5h2M7 5h2"/></g></svg>
<svg class="a" style="left:1129px;top:692px;" width="11" height="10" viewBox="0 0 11 10"><g fill="none" stroke="#333" stroke-width="0.9"><path d="M0.5 0.8h10M1.5 0.8v5h8v-5M5.5 5.8v3.5M3.5 9.3h4"/></g></svg>
<div class="a" style="left:1152px;top:696px;width:5px;height:1px;background:#444"></div>
<div class="a" style="left:1161px;top:696px;width:66px;height:1px;background:#b5b5b5"></div>
<div class="a" style="left:1190.7px;top:692px;width:4px;height:9px;background:#666;border-radius:1px"></div>
<div class="a" style="left:1230.5px;top:696px;width:5px;height:1px;background:#444"></div>
<div class="a" style="left:1232.5px;top:694px;width:1px;height:5px;background:#444"></div>
<div class="t" style="left:1243.20px;top:692.60px;font-size:7.8px;color:#444;transform:scaleX(0.9224);">97%</div>
<svg class="a" style="left:1266px;top:690px;" width="11" height="12" viewBox="0 0 11 12"><g fill="none" stroke="#444" stroke-width="0.9"><rect x="3" y="3.5" width="5" height="5"/><path d="M5.5 0.5l-1.5 1.8h3zM5.5 11.5l-1.5-1.8h3z M0.5 6l1.8-1.5v3z M10.5 6l-1.8-1.5v3z"/></g></svg>
<div class="a" style="left:0px;top:0px;width:1280px;height:16px;background:#000"></div>
<div class="a" style="left:0px;top:704px;width:1280px;height:16px;background:#000"></div>
<div class="a" style="left:322px;top:168px;width:827px;height:466px;background:#08025a;overflow:hidden"><div class="a" style="left:557px;top:195px;width:270px;height:270px;background:linear-gradient(135deg,rgba(60,90,245,.16),rgba(70,110,255,.30))"></div><div class="a" style="left:485px;top:123px;width:270px;height:270px;background:linear-gradient(135deg,rgba(65,100,255,.32),rgba(75,125,255,.55))"></div><div class="a" style="left:413px;top:51px;width:270px;height:270px;background:linear-gradient(135deg,rgba(62,98,250,.44),rgba(72,125,255,.88))"></div></div>
<div class="t" style="left:361.50px;top:347.33px;font-size:52.5px;color:#ffffff;font-family:'Liberation Serif',serif;transform:scaleX(1.0224);-webkit-text-stroke:0.9px #fff;">Society</div>
<div class="t" style="left:361.50px;top:402.33px;font-size:52.5px;color:#ffffff;font-family:'Liberation Serif',serif;transform:scaleX(1.0449);-webkit-text-stroke:0.9px #fff;">Sessions</div>
<div class="t" style="left:363.00px;top:458.52px;font-size:47.5px;color:#ffffff;font-family:'Liberation Serif',serif;transform:scaleX(1.0316);-webkit-text-stroke:0.9px #fff;">Member</div>
<div class="t" style="left:363.00px;top:509.32px;font-size:47.5px;color:#ffffff;font-family:'Liberation Serif',serif;transform:scaleX(0.9964);-webkit-text-stroke:0.9px #fff;">Renewal MY27</div>
<div class="t" style="left:363.00px;top:592.67px;font-size:6.3px;color:#ffffff;transform:scaleX(1.1130);-webkit-text-stroke:0.15px #fff;">© 2023 CFA Institute. All Rights Reserved</div>
<svg class="a" style="left:1118px;top:592px" width="6" height="9" viewBox="0 0 6 9"><path d="M2.6 0.8h1.4v7.6H2.8V2.3L1 3.1V2z" fill="#fff"/></svg>
<div class="a" style="left:1067px;top:16px;width:213px;height:119px;overflow:hidden;background:linear-gradient(90deg,#3e342e 0%,#62544a 18%,#6f6053 50%,#7e6d5e 100%)"><div class="a" style="left:0;top:0;width:213px;height:119px;filter:blur(3px)"><div class="a" style="left:-10px;top:-10px;width:240px;height:30px;background:#564a43;border-radius:0 0 50% 50%"></div><div class="a" style="left:-10px;top:18px;width:30px;height:110px;background:#2e2622;border-radius:40%"></div><div class="a" style="left:-6px;top:56px;width:40px;height:50px;border-radius:45%;background:radial-gradient(#3454c4,#283a90 55%,rgba(50,50,90,0) 100%);filter:blur(2.5px)"></div><div class="a" style="left:108px;top:-4px;width:12px;height:9px;border-radius:50%;background:#2e2620"></div><div class="a" style="left:86px;top:24px;width:78px;height:60px;border-radius:50% 50% 30% 30%;background:#a6845f"></div><div class="a" style="left:70px;top:62px;width:112px;height:62px;border-radius:40% 40% 20% 20%;background:#a08060"></div><div class="a" style="left:58px;top:108px;width:115px;height:30px;border-radius:45% 45% 0 0;background:#2d634f"></div></div><div class="a" style="left:0;top:0;width:213px;height:119px;filter:blur(1.6px)"><div class="a" style="left:83px;top:44px;width:15px;height:46px;border-radius:8px;background:#e6e2e2"></div><div class="a" style="left:149px;top:47px;width:13px;height:42px;border-radius:7px;background:#e2dede"></div><div class="a" style="left:96px;top:35px;width:57px;height:88px;border-radius:48% 48% 40% 40%;background:#dba998"></div><div class="a" style="left:101px;top:38px;width:46px;height:34px;border-radius:50%;background:#e6baa6"></div><div class="a" style="left:117px;top:89px;width:18px;height:13px;border-radius:45%;background:#c27f7a"></div><div class="a" style="left:119px;top:89px;width:14px;height:3px;border-radius:40%;background:#efd8d0"></div></div><div class="a" style="left:0;top:0;width:213px;height:119px;filter:blur(0.9px)"><div class="a" style="left:96px;top:57px;width:29px;height:22px;border-radius:42%;border:2.4px solid #7e4646;background:rgba(225,185,185,.3)"></div><div class="a" style="left:127px;top:57px;width:25px;height:21px;border-radius:42%;border:2.4px solid #7e4646;background:rgba(225,185,185,.3)"></div><div class="a" style="left:104px;top:62px;width:12px;height:5px;border-radius:50%;background:#8f7cd8"></div><div class="a" style="left:133px;top:62px;width:12px;height:5px;border-radius:50%;background:#8f7cd8"></div></div><div class="a" style="left:0;top:99px;width:50px;height:20px;background:rgba(24,20,18,.82)"></div></div>
<div class="t" style="left:1070.50px;top:118.61px;font-size:10.5px;color:#f2f2f2;font-weight:700;transform:scaleX(0.9569);">alia.page</div>
</body></html>
